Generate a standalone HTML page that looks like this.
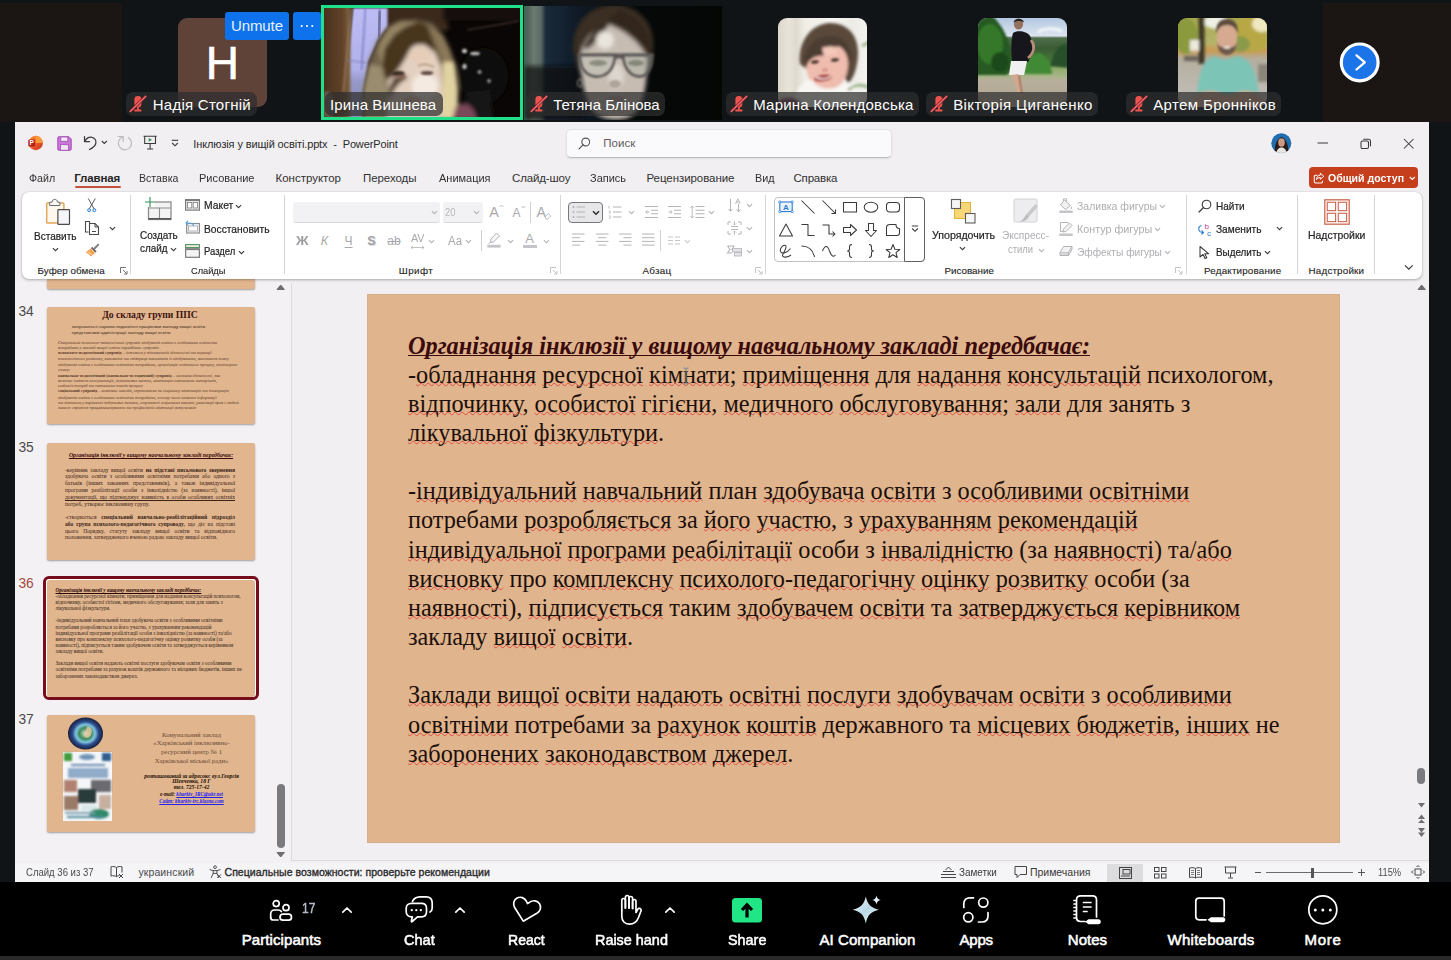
<!DOCTYPE html>
<html lang="uk"><head><meta charset="utf-8"><title>Zoom Meeting</title><style>
html,body{margin:0;padding:0}
body{width:1451px;height:960px;overflow:hidden;background:#111417;position:relative;font-family:"Liberation Sans",sans-serif}
.a{position:absolute;box-sizing:border-box}
.t{position:absolute;white-space:pre}
svg{position:absolute;overflow:visible}
.sl{font:400 24.27px/29px "Liberation Serif",serif;color:#1c0f0a}
.sl u{text-decoration:underline wavy rgba(225,40,40,.7);text-decoration-thickness:0.55px;text-underline-offset:-1.3px;text-decoration-skip-ink:none}

.lbl{position:absolute;top:91.5px;height:24.5px;border-radius:7px;background:rgba(46,46,46,.72)}
.nm{position:absolute;white-space:nowrap;color:#fff;font:400 15px/20px "Liberation Sans",sans-serif;top:94.5px}
.av{position:absolute;top:17.5px;width:89.5px;height:89px;border-radius:9px;overflow:hidden}

.th{position:absolute;left:46.5px;width:208.5px;height:117px;background:#e1b58d;border-radius:2px;box-shadow:0 1px 2px rgba(0,0,0,.35);overflow:hidden}
.th u{text-decoration-skip-ink:none;text-decoration-thickness:.5px}
.th div{position:absolute;white-space:nowrap;font-family:"Liberation Serif",serif;color:#2a1a12}

.tn{position:absolute;left:18.5px;font:400 13.8px/16px "Liberation Sans",sans-serif;color:#4a4a4a;letter-spacing:-.2px}
.j{text-align:justify;text-align-last:justify;white-space:normal!important}
</style></head><body>
<!-- p00_base.py -->
<div class="a" style="left:0px;top:0px;width:1451px;height:960px;background:#111417;"></div>
<div class="a" style="left:0px;top:3px;width:122px;height:119px;background:#1b1614;"></div>
<div class="a" style="left:1323px;top:3px;width:128px;height:119px;background:#1b1614;"></div>
<div class="a" style="left:15px;top:122px;width:1414px;height:760px;background:#f1eff2;"></div>
<div class="a" style="left:0px;top:882px;width:1451px;height:78px;background:#000;"></div>
<div class="a" style="left:0px;top:956px;width:1451px;height:4px;background:#2a2a2a;"></div>
<!-- p10_top.py -->
<div class="av" style="left:177.500px;background:#5f4339"></div>
<div class="t" style="left:22.4px;width:400px;text-align:center;top:33.0px;font:400 46px/60px 'Liberation Sans',sans-serif;color:#fff;-webkit-text-stroke:0.6px #fff;">Н</div>
<div class="a" style="left:225px;top:12px;width:64px;height:28px;background:#0e72ed;border-radius:3px"></div>
<div class="t" style="left:231.0px;top:16.0px;font:400 15px/20px 'Liberation Sans',sans-serif;color:#e8f1ff;letter-spacing:-0.105px;">Unmute</div>
<div class="a" style="left:293px;top:12px;width:28px;height:28px;background:#0e72ed;border-radius:3px"></div>
<svg style="left:293px;top:12px" width="28" height="28"><circle cx="8.700" cy="14" r="1.050" fill="#fff"/><circle cx="14" cy="14" r="1.050" fill="#fff"/><circle cx="19.300" cy="14" r="1.050" fill="#fff"/></svg>
<svg style="left:324px;top:8px" width="196" height="109" viewBox="0 0 196 109"><defs><filter id="b2" x="-20%" y="-20%" width="140%" height="140%"><feGaussianBlur stdDeviation="1.900"/></filter><filter id="b2s" x="-20%" y="-20%" width="140%" height="140%"><feGaussianBlur stdDeviation=".9"/></filter><clipPath id="c2"><rect width="196" height="109"/></clipPath><linearGradient id="w2" x1="0" y1="0" x2="0" y2="1"><stop offset="0" stop-color="#bdbcf5"/><stop offset=".55" stop-color="#b0b0ea"/><stop offset=".66" stop-color="#9598c8"/><stop offset="1" stop-color="#8a8eb4"/></linearGradient><linearGradient id="k2" x1="0" x2="1"><stop offset="0" stop-color="#45301d"/><stop offset=".45" stop-color="#573c24"/><stop offset=".75" stop-color="#62442a"/><stop offset="1" stop-color="#856848"/></linearGradient></defs>
<g clip-path="url(#c2)"><rect width="196" height="109" fill="#0a0605"/>
<rect x="60" y="-3" width="64" height="26" fill="#3a2a1b" filter="url(#b2)"/>
<rect x="120" y="-3" width="80" height="16" fill="#17100b" filter="url(#b2)"/>
<path d="M29.0 0.0 L63.5 0.0 L63.5 18.9 L54.0 32.4 L44.6 54.0 L39.2 82.4 L39.2 112.1 L18.9 112.1 L20.3 82.4z" fill="url(#w2)" filter="url(#b2s)"/>
<rect x="-2" y="-2" width="28.500" height="113" fill="url(#k2)" filter="url(#b2s)"/>
<path d="M27.500 0L19.500 84" stroke="#8c7050" stroke-width="2.200" filter="url(#b2s)"/>
<path d="M41.500 0L37.500 62" stroke="#6e6db8" stroke-width="1.200" filter="url(#b2s)"/>
<path d="M56 2L54.500 30" stroke="#5d5d84" stroke-width="3" filter="url(#b2s)"/>
<path d="M23 52L42 55" stroke="#7a7eac" stroke-width="1" filter="url(#b2s)"/>
<path d="M0 84C4 82 8 84 10 90V109H0z" fill="#6a5a4a" filter="url(#b2s)"/>
<g filter="url(#b2)">
<ellipse cx="160" cy="68" rx="24" ry="28" fill="#0b0d08"/>
<path d="M142 84L166 82L170 112H138z" fill="#161618"/>
<path d="M39.2 112.1 L38.5 83.7 L44.6 54.0 L54.0 31.1 L63.5 18.9 L75.6 12.8 L94.6 11.9 L108.1 14.9 L118.9 27.0 L125.6 40.5 L132.4 58.1 L134.4 81.0 L133.1 112.1z" fill="#6e6046"/>
<path d="M64.8 20.3 L75.6 13.5 L93.2 12.8 L86.5 24.3 L75.6 35.1 L63.5 51.3 L56.7 56.7 L54.0 40.5z" fill="#948464"/>
<path d="M104.0 16.9 L118.9 27.0 L125.6 40.5 L129.7 54.0 L121.6 59.4 L116.2 45.9 L110.8 32.4z" fill="#8a7858"/>
<path d="M39.2 112.1 L38.5 83.7 L44.6 56.7 L58.1 58.1 L61.5 70.2 L62.8 83.7 L62.8 112.1z" fill="#9a8c6e"/>
<path d="M118.9 54.0 L129.7 54.0 L134.0 81.0 L133.1 112.1 L117.5 112.1 L118.3 81.0z" fill="#e2d3a2"/>
<path d="M62.8 112.1 L63.5 82.4 L64.8 63.5 L72.9 45.9 L86.5 37.1 L100.0 36.5 L110.8 44.6 L117.2 59.4 L118.3 81.0 L117.5 112.1z" fill="#e4d0c0"/>
<path d="M94.6 13.5 L102.7 17.6 L108.1 31.1 L112.1 44.6 L108.1 40.5 L100.0 35.8 L91.9 36.5 L86.5 40.5 L81.0 51.3 L75.6 59.4 L67.5 70.2 L60.8 70.2 L58.1 56.7 L60.8 40.5 L70.2 27.0 L81.0 18.9z" fill="#46351f"/>
<ellipse cx="101" cy="78" rx="13" ry="13" fill="#f4eae2"/>
<ellipse cx="96" cy="48" rx="11" ry="7" fill="#e6cdb8"/>
<path d="M64 84C66 74 70 68 78 64L84 70C76 74 70 80 66 92z" fill="#5a4632"/>
<path d="M132 98C142 92 150 98 153 112H128z" fill="#7c4a5a"/>
</g>
<g filter="url(#b2s)"><ellipse cx="74" cy="65.500" rx="6.500" ry="2.600" fill="#3a2a22"/><ellipse cx="76" cy="69" rx="6" ry="2" fill="#8a6a5c" opacity=".7"/><ellipse cx="103" cy="65" rx="6.500" ry="2" fill="#5c483c"/><path d="M94 58C98 56 104 56 110 59" stroke="#a08060" stroke-width="1.200" fill="none"/><ellipse cx="88" cy="92" rx="9" ry="4" fill="#cfa090" opacity=".6"/>
<ellipse cx="140.500" cy="43" rx="2.600" ry="2.200" fill="#c8c8c8"/><ellipse cx="151" cy="45.500" rx="5" ry="1.800" fill="#bcbcbc"/><ellipse cx="140.500" cy="58.500" rx="2.200" ry="2.800" fill="#b8b8b8"/><circle cx="155.500" cy="64" r="2" fill="#9c9c9c"/><circle cx="165" cy="73" r="2" fill="#8c8c8c"/>
<path d="M143 22L195 13" stroke="#4a3c36" stroke-width="1.200"/></g>
</g></svg>
<div class="a" style="left:321px;top:5px;width:202px;height:115px;border:3px solid #21e08a"></div>
<svg style="left:523.500px;top:6px" width="198" height="114" viewBox="0 0 198 114"><defs><filter id="b3" x="-20%" y="-20%" width="140%" height="140%"><feGaussianBlur stdDeviation="2.200"/></filter><filter id="b3s" x="-20%" y="-20%" width="140%" height="140%"><feGaussianBlur stdDeviation=".9"/></filter><clipPath id="c3"><rect width="198" height="114"/></clipPath><linearGradient id="g3" x1="0" x2="1"><stop offset="0" stop-color="#1f7a52"/><stop offset=".012" stop-color="#4f6058"/><stop offset=".05" stop-color="#6c7a70"/><stop offset=".085" stop-color="#5a6a64"/><stop offset=".11" stop-color="#1a2a3a"/><stop offset=".25" stop-color="#101c2a"/><stop offset=".5" stop-color="#060a0a"/><stop offset="1" stop-color="#040604"/></linearGradient></defs>
<g clip-path="url(#c3)"><rect width="198" height="114" fill="url(#g3)"/>
<rect x="0" y="60" width="60" height="54" fill="#080c0e" opacity=".7" filter="url(#b3)"/>
<g filter="url(#b3)">
<path d="M50 48C46 22 62 0 90 -2C118 0 134 22 128 50C126 62 120 70 116 74L62 74C56 68 52 60 50 48z" fill="#3a2e24"/>
<path d="M57 50C58 34 70 22 84 18C100 24 116 36 122 50C124 70 122 92 112 106C104 116 80 116 70 106C60 94 56 70 57 50z" fill="#c6bcb2"/>
<path d="M60 40C68 26 78 16 88 12C82 24 76 34 62 44z" fill="#3a2e24"/>
<path d="M84 14C100 18 116 30 126 48C128 30 118 10 96 4z" fill="#32281e"/>
<ellipse cx="81" cy="34" rx="9" ry="9" fill="#e9e4dc"/>
<ellipse cx="92" cy="70" rx="8" ry="12" fill="#ddd6ce"/>
</g>
<g filter="url(#b3s)"><path d="M55 49H128" stroke="#5c5856" stroke-width="3"/><path d="M55.500 49C56 62 62 70 72 70.500C84 70.500 90 62 91 49z" fill="rgba(190,196,184,.4)" stroke="#5c5856" stroke-width="2.800"/><path d="M99 49C100 62 106 70 115 70.500C124 70.500 128 62 128.500 49z" fill="rgba(170,176,164,.38)" stroke="#5c5856" stroke-width="2.800"/><path d="M91 52C94 50 96 50 99 52" stroke="#5c5856" stroke-width="3" fill="none"/></g>
<g filter="url(#b3s)"><ellipse cx="74" cy="57" rx="9" ry="3" fill="#7c8070" opacity=".8"/><ellipse cx="112" cy="57" rx="8" ry="3" fill="#767a6c" opacity=".8"/><ellipse cx="91" cy="78" rx="6" ry="4" fill="#b0a498"/><ellipse cx="56" cy="77" rx="2.500" ry="4" fill="none" stroke="#9a9488" stroke-width="1"/><ellipse cx="92" cy="93" rx="10" ry="3" fill="#a89088" opacity=".7"/></g>
</g></svg>
<div class="av" style="left:777.500px"><svg width="90" height="89" viewBox="0 0 90 89"><defs><filter id="b4" x="-20%" y="-20%" width="140%" height="140%"><feGaussianBlur stdDeviation="1.700"/></filter><filter id="b4s" x="-20%" y="-20%" width="140%" height="140%"><feGaussianBlur stdDeviation=".8"/></filter><linearGradient id="g4" x1="0" x2="1"><stop offset="0" stop-color="#dcd6ca"/><stop offset=".12" stop-color="#e9e4da"/><stop offset=".2" stop-color="#dfdacf"/><stop offset=".3" stop-color="#f0ede6"/><stop offset=".6" stop-color="#f6f5f1"/><stop offset=".82" stop-color="#ecebe6"/><stop offset="1" stop-color="#f4f3ef"/></linearGradient></defs>
<rect width="90" height="89" fill="url(#g4)"/>
<g filter="url(#b4)">
<path d="M22 46C20 26 30 8 50 5C68 4 80 16 80 34C80 48 76 60 70 66L62 50L30 52z" fill="#5a483a"/>
<path d="M28 46C28 34 36 26 48 25C62 24 70 34 70 46C70 60 62 72 50 74C38 74 28 62 28 46z" fill="#efbcae"/>
<path d="M26 40C30 24 42 16 56 18C68 20 74 30 74 44C70 36 66 30 60 28C56 34 50 38 42 38C36 38 30 42 28 50z" fill="#4c3c30"/>
<path d="M44 30C50 28 56 28 60 30L58 36L46 38z" fill="#f4c8ba"/>
<path d="M14 92C16 74 24 62 34 62C40 72 56 74 66 64C76 64 84 74 86 92z" fill="#f7f6f3"/>
<path d="M0 84C6 78 18 78 24 86V92H0z" fill="#7a3a5c"/>
<path d="M70 72C78 66 84 66 92 70M84 28C88 26 90 24 92 24" stroke="#7f9a66" stroke-width="2.200" fill="none"/>
</g>
<g filter="url(#b4s)"><ellipse cx="45" cy="60" rx="9" ry="3.300" fill="#b04a48" transform="rotate(-8 45 60)"/><path d="M38 59C43 62 49 61 53 58" stroke="#f6eeea" stroke-width="1.500" fill="none"/><ellipse cx="37" cy="44" rx="4" ry="1.700" fill="#4a382e" transform="rotate(-6 37 44)"/><ellipse cx="57" cy="42" rx="4" ry="1.700" fill="#4a382e" transform="rotate(-6 57 42)"/><ellipse cx="47" cy="52" rx="3" ry="2" fill="#dc9a8c"/></g></svg></div>
<div class="av" style="left:977.500px"><svg width="90" height="89" viewBox="0 0 90 89"><defs><filter id="b5" x="-20%" y="-20%" width="140%" height="140%"><feGaussianBlur stdDeviation="1.300"/></filter><filter id="b5s" x="-20%" y="-20%" width="140%" height="140%"><feGaussianBlur stdDeviation=".7"/></filter><linearGradient id="g5" x1="0" y1="0" x2="0" y2="1"><stop offset="0" stop-color="#b4c8e2"/><stop offset=".2" stop-color="#dbe4ee"/><stop offset=".225" stop-color="#4f6d4c"/><stop offset=".34" stop-color="#3a5c34"/><stop offset=".5" stop-color="#4a7a3a"/><stop offset=".56" stop-color="#8eaa6a"/><stop offset=".66" stop-color="#a9b58a"/><stop offset=".7" stop-color="#b8ae9c"/><stop offset="1" stop-color="#b0a594"/></linearGradient></defs>
<rect width="90" height="89" fill="url(#g5)"/>
<g filter="url(#b5)">
<path d="M-2 -2H14C24 6 32 22 34 40C35 50 32 56 28 57H-2z" fill="#265a22"/>
<ellipse cx="12" cy="26" rx="13" ry="20" fill="#34782c"/><ellipse cx="22" cy="44" rx="9" ry="10" fill="#1f4a1c"/>
<path d="M46 56C48 42 56 32 64 36C70 40 74 50 74 56z" fill="#418a34"/>
<path d="M72 48C76 30 84 24 92 26V50z" fill="#26502a"/>
<path d="M60 14C66 10 76 10 84 13" stroke="#f4f6f8" stroke-width="3" fill="none"/>
</g>
<g filter="url(#b5s)">
<ellipse cx="40.500" cy="6" rx="4.600" ry="5.600" fill="#94705e"/><path d="M35.500 4.500C36.500 -.5 45 -.5 46 4.500C43 2.500 38.500 2.500 35.500 4.500z" fill="#2a2420"/>
<path d="M35 15C39 12 49 13 52 18C55 24 56 30 54 36L50 44H34C33 34 33 22 35 15z" fill="#15151a"/>
<path d="M53 22C57 27 57 34 50 40" stroke="#b58c76" stroke-width="2.800" fill="none"/>
<path d="M33 43H49L46 57H31z" fill="#f0f0f0"/>
<path d="M33 57L41 78H45L40 56z" fill="#cfa88e"/><path d="M41 57L44 76" stroke="#b48c74" stroke-width="3"/>
</g></svg></div>
<div class="av" style="left:1177.500px"><svg width="90" height="89" viewBox="0 0 90 89"><defs><filter id="b6" x="-20%" y="-20%" width="140%" height="140%"><feGaussianBlur stdDeviation="1.500"/></filter><filter id="b6s" x="-20%" y="-20%" width="140%" height="140%"><feGaussianBlur stdDeviation=".8"/></filter><linearGradient id="g6" x1="0" y1="0" x2="0" y2="1"><stop offset="0" stop-color="#a8a850"/><stop offset=".28" stop-color="#b6b46c"/><stop offset=".36" stop-color="#c99a52"/><stop offset=".46" stop-color="#b4ae9e"/><stop offset="1" stop-color="#c4c2be"/></linearGradient></defs>
<rect width="90" height="89" fill="url(#g6)"/>
<g filter="url(#b6)">
<ellipse cx="74" cy="16" rx="20" ry="18" fill="#b8a844"/><ellipse cx="84" cy="6" rx="10" ry="8" fill="#f0e8c0"/><ellipse cx="8" cy="18" rx="12" ry="18" fill="#8a9a3c"/><ellipse cx="38" cy="4" rx="12" ry="7" fill="#eef0e4"/><ellipse cx="62" cy="26" rx="10" ry="8" fill="#8a9a4a"/>
<rect x="20.500" y="-2" width="6" height="48" fill="#3a3424"/>
<rect x="12" y="22" width="9" height="11" fill="#ece8dc"/>
<rect x="6" y="38" width="14" height="5" fill="#6a6458"/>
<rect x="80" y="46" width="12" height="18" fill="#8a857a"/>
<path d="M19 92C19 62 22 44 36 38L46 42L60 38C76 42 81 60 81 92z" fill="#7cc4b6"/>
<path d="M16 80C24 70 38 72 50 78C62 72 76 70 84 80V92H16z" fill="#d6aa90"/>
</g>
<g filter="url(#b6s)"><path d="M39 14C39 6 43 3 49 3C55 3 59 6 59 14V24C59 32 55 36 49 36C43 36 39 32 39 24z" fill="#d6aa90"/><path d="M38.500 16C37 6 42 1 49 1C56 1 61 6 59.500 16C58 10 54 7 49 7C44 7 40 10 38.500 16z" fill="#5c4c3e"/><path d="M39.500 24C41 30 44 29 49 29C54 29 57 30 58.500 24C59 32 55 37 49 37C43 37 39 32 39.500 24z" fill="#6e5848"/><ellipse cx="49" cy="29.500" rx="3.500" ry="1.200" fill="#f0e4de"/></g></svg></div>
<div class="lbl" style="left:125.5px;width:131.0px"></div>
<svg style="left:129.0px;top:95px" width="18" height="18" viewBox="0 0 18 18"><g fill="#ee5350"><rect x="5.400" y="1" width="7" height="11.500" rx="3.400"/><rect x="8" y="12" width="1.800" height="3"/><rect x="5.200" y="14.600" width="7.400" height="2" rx=".8"/></g><path d="M1.200 16.500L16.800 1.300" stroke="#7a1a1a" stroke-width="3"/><path d="M1.200 16.500L16.800 1.300" stroke="#f2707a" stroke-width="1.400" stroke-linecap="round"/></svg>
<div class="nm" style="left:152.7px;letter-spacing:0.258px">Надія Стогній</div>
<div class="lbl" style="left:324.5px;width:118.0px"></div>
<div class="nm" style="left:330.1px;letter-spacing:0.094px">Ірина Вишнева</div>
<div class="lbl" style="left:526px;width:139px"></div>
<svg style="left:529.5px;top:95px" width="18" height="18" viewBox="0 0 18 18"><g fill="#ee5350"><rect x="5.400" y="1" width="7" height="11.500" rx="3.400"/><rect x="8" y="12" width="1.800" height="3"/><rect x="5.200" y="14.600" width="7.400" height="2" rx=".8"/></g><path d="M1.200 16.500L16.800 1.300" stroke="#7a1a1a" stroke-width="3"/><path d="M1.200 16.500L16.800 1.300" stroke="#f2707a" stroke-width="1.400" stroke-linecap="round"/></svg>
<div class="nm" style="left:553.2px;letter-spacing:0.001px">Тетяна Блінова</div>
<div class="lbl" style="left:726px;width:193px"></div>
<svg style="left:729.5px;top:95px" width="18" height="18" viewBox="0 0 18 18"><g fill="#ee5350"><rect x="5.400" y="1" width="7" height="11.500" rx="3.400"/><rect x="8" y="12" width="1.800" height="3"/><rect x="5.200" y="14.600" width="7.400" height="2" rx=".8"/></g><path d="M1.200 16.500L16.800 1.300" stroke="#7a1a1a" stroke-width="3"/><path d="M1.200 16.500L16.800 1.300" stroke="#f2707a" stroke-width="1.400" stroke-linecap="round"/></svg>
<div class="nm" style="left:753.2px;letter-spacing:0.228px">Марина Колендовська</div>
<div class="lbl" style="left:926px;width:172px"></div>
<svg style="left:929.5px;top:95px" width="18" height="18" viewBox="0 0 18 18"><g fill="#ee5350"><rect x="5.400" y="1" width="7" height="11.500" rx="3.400"/><rect x="8" y="12" width="1.800" height="3"/><rect x="5.200" y="14.600" width="7.400" height="2" rx=".8"/></g><path d="M1.200 16.500L16.800 1.300" stroke="#7a1a1a" stroke-width="3"/><path d="M1.200 16.500L16.800 1.300" stroke="#f2707a" stroke-width="1.400" stroke-linecap="round"/></svg>
<div class="nm" style="left:953.2px;letter-spacing:0.422px">Вікторія Циганенко</div>
<div class="lbl" style="left:1126px;width:155px"></div>
<svg style="left:1129.5px;top:95px" width="18" height="18" viewBox="0 0 18 18"><g fill="#ee5350"><rect x="5.400" y="1" width="7" height="11.500" rx="3.400"/><rect x="8" y="12" width="1.800" height="3"/><rect x="5.200" y="14.600" width="7.400" height="2" rx=".8"/></g><path d="M1.200 16.500L16.800 1.300" stroke="#7a1a1a" stroke-width="3"/><path d="M1.200 16.500L16.800 1.300" stroke="#f2707a" stroke-width="1.400" stroke-linecap="round"/></svg>
<div class="nm" style="left:1153.2px;letter-spacing:0.399px">Артем Бронніков</div>
<svg style="left:1339px;top:42px" width="42" height="42" viewBox="0 0 42 42"><circle cx="20.700" cy="20.400" r="18.400" fill="#1b74e8" stroke="#fff" stroke-width="3.200"/><path d="M17.500 13.300L25.800 20.400L17.500 27.500" fill="none" stroke="#fff" stroke-width="2.300" stroke-linecap="round" stroke-linejoin="round"/></svg>
<!-- p20_titlebar.py -->
<svg style="left:27px;top:135px" width="17" height="17" viewBox="0 0 17 17"><defs><linearGradient id="pl" x1="0" y1="0" x2="1" y2="1"><stop offset="0" stop-color="#f9a03c"/><stop offset=".5" stop-color="#ee5b2a"/><stop offset="1" stop-color="#c4321c"/></linearGradient></defs><circle cx="8.700" cy="8" r="7.200" fill="url(#pl)"/><path d="M8.700 .8A7.200 7.200 0 0 1 15.900 8H8.700z" fill="#fb9a3a"/><rect x="1.300" y="4.600" width="6.800" height="6.800" rx="1.200" fill="#b4241c"/><text x="4.700" y="10.300" font-family="Liberation Sans,sans-serif" font-size="6.500" font-weight="700" fill="#fff" text-anchor="middle">P</text></svg>
<svg style="left:57px;top:135.500px" width="15" height="15" viewBox="0 0 15 15"><path d="M.8 1.800C.8 1.200 1.200 .8 1.800 .8H12L14.200 3V13.200C14.200 13.800 13.800 14.200 13.200 14.200H1.800C1.200 14.200 .8 13.800 .8 13.200z" fill="#c879d8" stroke="#a24cb6" stroke-width="1"/><rect x="3.800" y="1" width="7" height="4.300" fill="#f3e6f6" stroke="#a24cb6" stroke-width=".8"/><rect x="3.500" y="8.700" width="8" height="5.500" fill="#f3e6f6" stroke="#a24cb6" stroke-width=".8"/></svg>
<svg style="left:83px;top:135px" width="15" height="16" viewBox="0 0 15 16"><path d="M1.500 1.500V6.500H6.500M1.800 6.300C3.500 3.300 6.500 1.800 9 2.300C12 2.900 13.500 5.600 12.800 8.500C12.200 11 9.500 13 6.500 14.500" fill="none" stroke="#3b3a39" stroke-width="1.250" stroke-linecap="round" stroke-linejoin="round"/></svg>
<svg style="left:100.800px;top:140.200px" width="7" height="5"><path d="M.8 1L3.300 3.500L5.800 1" fill="none" stroke="#3b3a39" stroke-width="1.100"/></svg>
<svg style="left:116.500px;top:135px" width="16" height="16" viewBox="0 0 16 16"><path d="M11.300 2.500A6.600 6.600 0 1 1 3.300 3.500L6 1.500" fill="none" stroke="#bbbabe" stroke-width="1.200" stroke-linecap="round"/><path d="M1.200 1.500H6.200V6.400" fill="none" stroke="#bbbabe" stroke-width="1.200" stroke-linecap="round" stroke-linejoin="round"/></svg>
<svg style="left:142.500px;top:135px" width="14.200" height="15.500" viewBox="0 0 15 16" preserveAspectRatio="none"><path d="M.5 1.300H14.500M1.800 1.300V8.800H13.200V1.300M7.500 8.800V14.300M4.300 14.500H10.700" fill="none" stroke="#3b3a39" stroke-width="1.150"/><path d="M6 3.200L9.500 5L6 6.900z" fill="#2e8b57"/></svg>
<svg style="left:171px;top:139.300px" width="8" height="9"><path d="M.8 1.300H7.200" stroke="#3b3a39" stroke-width="1.100"/><path d="M1.200 4L4 6.800L6.800 4" fill="none" stroke="#3b3a39" stroke-width="1.100"/></svg>
<div class="t" style="left:193.3px;top:136.6px;font:400 11px/14px 'Liberation Sans',sans-serif;color:#2b2b2b;letter-spacing:-0.128px;">Інклюзія у вищій освіті.pptx  -  PowerPoint</div>
<div class="a" style="left:566px;top:129px;width:326px;height:28.500px;border-radius:5px;background:#faf9fb;border:1px solid #e2e1e5;border-bottom-color:#bcbbc0;box-shadow:0 1px 2px rgba(0,0,0,.08)"></div>
<svg style="left:578px;top:137px" width="13" height="13" viewBox="0 0 13 13"><circle cx="7.700" cy="5" r="3.900" fill="none" stroke="#555" stroke-width="1.100"/><path d="M5 7.800L1 11.800" stroke="#555" stroke-width="1.200" stroke-linecap="round"/></svg>
<div class="t" style="left:603.3px;top:136.0px;font:400 11.5px/15px 'Liberation Sans',sans-serif;color:#605e5c;letter-spacing:0.033px;">Поиск</div>
<svg style="left:1271px;top:133px" width="21" height="21" viewBox="0 0 21 21"><defs><clipPath id="ua"><circle cx="10.300" cy="10.300" r="10"/></clipPath><filter id="ub"><feGaussianBlur stdDeviation=".6"/></filter></defs><g clip-path="url(#ua)"><rect width="21" height="21" fill="#1f6fb0"/><g filter="url(#ub)"><path d="M4 21C3 14 5 6 10.500 4C16 6 18 14 17 21z" fill="#2a1c18"/><ellipse cx="10.500" cy="9.500" rx="3.300" ry="4.200" fill="#c99a84"/><path d="M5 21C6 16 8 14.500 10.500 14.500C13 14.500 15 16 16 21z" fill="#e8e4e0"/></g></g></svg>
<svg style="left:1317px;top:142px" width="12" height="2"><path d="M.5 1H11" stroke="#3b3a39" stroke-width="1"/></svg>
<svg style="left:1359.500px;top:137.500px" width="12" height="12" viewBox="0 0 12 12"><rect x="1" y="3" width="7.500" height="7.500" rx="1.500" fill="none" stroke="#3b3a39" stroke-width="1.050"/><path d="M3.300 1.200H8.500C9.800 1.200 10.500 1.900 10.500 3.200V8.300" fill="none" stroke="#3b3a39" stroke-width="1.050"/></svg>
<svg style="left:1402.500px;top:137.500px" width="12" height="12" viewBox="0 0 12 12"><path d="M1 1L10.500 10.500M10.500 1L1 10.500" stroke="#3b3a39" stroke-width="1.050"/></svg>
<div class="t" style="left:29.3px;top:170.8px;font:400 11.5px/15px 'Liberation Sans',sans-serif;color:#323130;transform:scaleX(0.9267);transform-origin:0 50%;">Файл</div>
<div class="t" style="left:138.8px;top:170.8px;font:400 11.5px/15px 'Liberation Sans',sans-serif;color:#323130;transform:scaleX(0.9218);transform-origin:0 50%;">Вставка</div>
<div class="t" style="left:198.5px;top:170.8px;font:400 11.5px/15px 'Liberation Sans',sans-serif;color:#323130;transform:scaleX(0.9583);transform-origin:0 50%;">Рисование</div>
<div class="t" style="left:275.5px;top:170.8px;font:400 11.5px/15px 'Liberation Sans',sans-serif;color:#323130;letter-spacing:-0.007px;">Конструктор</div>
<div class="t" style="left:363.0px;top:170.8px;font:400 11.5px/15px 'Liberation Sans',sans-serif;color:#323130;letter-spacing:-0.063px;">Переходы</div>
<div class="t" style="left:439.0px;top:170.8px;font:400 11.5px/15px 'Liberation Sans',sans-serif;color:#323130;transform:scaleX(0.9540);transform-origin:0 50%;">Анимация</div>
<div class="t" style="left:512.0px;top:170.8px;font:400 11.5px/15px 'Liberation Sans',sans-serif;color:#323130;letter-spacing:-0.140px;">Слайд-шоу</div>
<div class="t" style="left:589.5px;top:170.8px;font:400 11.5px/15px 'Liberation Sans',sans-serif;color:#323130;transform:scaleX(0.9540);transform-origin:0 50%;">Запись</div>
<div class="t" style="left:646.5px;top:170.8px;font:400 11.5px/15px 'Liberation Sans',sans-serif;color:#323130;letter-spacing:-0.061px;">Рецензирование</div>
<div class="t" style="left:755.0px;top:170.8px;font:400 11.5px/15px 'Liberation Sans',sans-serif;color:#323130;transform:scaleX(0.9373);transform-origin:0 50%;">Вид</div>
<div class="t" style="left:793.5px;top:170.8px;font:400 11.5px/15px 'Liberation Sans',sans-serif;color:#323130;letter-spacing:-0.185px;">Справка</div>
<div class="t" style="left:74.3px;top:170.8px;font:700 11.5px/15px 'Liberation Sans',sans-serif;color:#252423;letter-spacing:-0.128px;">Главная</div>
<div class="a" style="left:74.5px;top:185.7px;width:46.3px;height:2.2px;background:#c1533b;border-radius:1px"></div>
<div class="a" style="left:1309.3px;top:167px;width:108.6px;height:21px;background:#c63f1d;border-radius:4px"></div>
<svg style="left:1312.500px;top:171.500px" width="12" height="12" viewBox="0 0 12 12"><path d="M4.500 3.200H2.500C1.800 3.200 1.300 3.700 1.300 4.400V9.800C1.300 10.500 1.800 11 2.500 11H8.300C9 11 9.500 10.500 9.500 9.800V8.800" fill="none" stroke="#fff" stroke-width="1.050"/><path d="M7.300 1.200L10.800 4.300L7.300 7.300V5.500C5.500 5.500 4.300 6.200 3.500 7.600C3.700 4.800 5 3.300 7.300 3.100z" fill="none" stroke="#fff" stroke-width="1" stroke-linejoin="round"/></svg>
<div class="t" style="left:1327.6px;top:170.5px;font:700 11.5px/15px 'Liberation Sans',sans-serif;color:#fff;transform:scaleX(0.9166);transform-origin:0 50%;">Общий доступ</div>
<svg style="left:1409px;top:175.500px" width="7" height="5"><path d="M.8 1L3.300 3.500L5.800 1" fill="none" stroke="#fff" stroke-width="1.100"/></svg>
<!-- p25_content.py -->
<div class="a" style="left:15px;top:282px;width:277px;height:580px;background:#f3f1f4;"></div>
<div class="a" style="left:290.8px;top:283px;width:1px;height:578px;background:#dad9dd;"></div>
<div class="a" style="left:292px;top:860px;width:1137px;height:1px;background:#dddce0;"></div>
<div class="a" style="left:15px;top:862.5px;width:1414px;height:19.5px;background:#f5f4f6;"></div>
<div class="th" style="top:279px;height:9.500px;border-radius:0 0 2px 2px"></div>
<div class="th" style="top:307.4px"><div style="left:-0.6px;top:1.85px;font-size:9.6px;line-height:11.52px;width:208px;text-align:center;font-weight:700;color:#3c1412">До складу групи ППС</div><div style="left:25.3px;top:17.00px;font-size:4.35px;line-height:5.22px;font-family:'Liberation Sans',sans-serif;color:#3a2a20">залучаються науково-педагогічні працівники закладу вищої освіти,</div><div style="left:25.3px;top:22.30px;font-size:4.35px;line-height:5.22px;font-family:'Liberation Sans',sans-serif;color:#3a2a20">представники адміністрації закладу вищої освіти</div><div style="left:11.5px;top:32.16px;font-size:4.25px;line-height:5.10px;color:#5a3a2a"><i>Спеціальний психолого-педагогічний супровід здобувачів освіти з особливими освітніми</i></div><div style="left:11.5px;top:37.37px;font-size:4.25px;line-height:5.10px;color:#5a3a2a"><i>потребами у закладі вищої освіти передбачає супровід:</i></div><div style="left:11.5px;top:42.97px;font-size:4.25px;line-height:5.10px;color:#5a3a2a"><b>психолого-педагогічний супровід</b> <i>– допомога у пізнавальній діяльності та корекції</i></div><div style="left:11.5px;top:48.77px;font-size:4.25px;line-height:5.10px;color:#5a3a2a"><i>психологічного розвитку, виховання та співпраця викладачів із здобувачами, визначення плану</i></div><div style="left:11.5px;top:54.16px;font-size:4.25px;line-height:5.10px;color:#5a3a2a"><i>здобувачів освіти з особливими освітніми потребами, організація освітнього процесу, моніторинг</i></div><div style="left:11.5px;top:59.37px;font-size:4.25px;line-height:5.10px;color:#5a3a2a"><i>стану.</i></div><div style="left:11.5px;top:65.16px;font-size:4.25px;line-height:5.10px;color:#5a3a2a"><b>навчально-педагогічний (навчально-методичний) супровід</b> <i>– система діяльності, яка</i></div><div style="left:11.5px;top:70.16px;font-size:4.25px;line-height:5.10px;color:#5a3a2a"><i>включає надання консультацій, додаткових занять, адаптацію навчальних матеріалів,</i></div><div style="left:11.5px;top:75.36px;font-size:4.25px;line-height:5.10px;color:#5a3a2a"><i>освітніх потреб та навчальних планів процесу</i></div><div style="left:11.5px;top:80.96px;font-size:4.25px;line-height:5.10px;color:#5a3a2a"><b>соціальний супровід</b> <i>– комплекс заходів, спрямованих на соціальну адаптацію та інтеграцію</i></div><div style="left:11.5px;top:87.16px;font-size:4.25px;line-height:5.10px;color:#5a3a2a"><i>здобувачів освіти з особливими освітніми потребами, в тому числі надання інформації</i></div><div style="left:11.5px;top:92.16px;font-size:4.25px;line-height:5.10px;color:#5a3a2a"><i>та допомоги у вирішенні побутових питань, отриманні соціальних виплат, реалізації прав і свобод</i></div><div style="left:11.5px;top:97.36px;font-size:4.25px;line-height:5.10px;color:#5a3a2a"><i>також сприяння працевлаштуванню та професійній адаптації випускників</i></div></div>
<div class="th" style="top:443.4px"><div style="left:0px;top:8.97px;font-size:5.85px;line-height:7.02px;width:208px;text-align:center;font-weight:700;font-style:italic;color:#3a0a0c;left:.5px"><u>Організація інклюзії у вищому навчальному закладі передбачає:</u></div><div class="j" style="left:18.5px;top:23.13px;font-size:5.6px;line-height:6.72px;width:170px;color:#3a2418">-керівник закладу вищої освіти <b>на підставі письмового звернення</b></div><div class="j" style="left:18.5px;top:29.53px;font-size:5.6px;line-height:6.72px;width:170px;color:#3a2418">здобувача освіти з особливими освітніми потребами або одного з</div><div class="j" style="left:18.5px;top:36.73px;font-size:5.6px;line-height:6.72px;width:170px;color:#3a2418">батьків (інших законних представників), а також індивідуальної</div><div class="j" style="left:18.5px;top:43.13px;font-size:5.6px;line-height:6.72px;width:170px;color:#3a2418">програми реабілітації особи з інвалідністю (за наявності), іншої</div><div class="j" style="left:18.5px;top:50.13px;font-size:5.6px;line-height:6.72px;width:170px;color:#3a2418"><u>документації, що підтверджує наявність в особи особливих освітніх</u></div><div style="left:18.5px;top:57.13px;font-size:5.6px;line-height:6.72px;color:#3a2418">потреб, утворює інклюзивну групу.</div><div class="j" style="left:18.5px;top:70.53px;font-size:5.6px;line-height:6.72px;width:170px;color:#3a2418">-створюється <b>спеціальний навчально-реабілітаційний підрозділ</b></div><div class="j" style="left:18.5px;top:77.13px;font-size:5.6px;line-height:6.72px;width:170px;color:#3a2418"><b>або група психолого-педагогічного супроводу</b>, що діє на підставі</div><div class="j" style="left:18.5px;top:84.13px;font-size:5.6px;line-height:6.72px;width:170px;color:#3a2418">цього Порядку, статуту закладу вищої освіти та відповідного</div><div style="left:18.5px;top:90.53px;font-size:5.6px;line-height:6.72px;color:#3a2418">положення, затвердженого вченою радою закладу вищої освіти.</div></div>
<div class="a" style="left:43px;top:576px;width:215.500px;height:124px;border:3px solid #760c1c;border-radius:6px;background:#fff"></div>
<div class="th" style="top:579.5px;box-shadow:none;border-radius:3px"><div style="left:9px;top:7.08px;font-size:5.19px;line-height:6.23px;font-weight:700;font-style:italic;color:#2a0608"><u>Організація інклюзії у вищому навчальному закладі передбачає:</u></div><div style="left:9px;top:13.28px;font-size:5.19px;line-height:6.23px;color:#33241a">-обладнання ресурсної кімнати; приміщення для надання консультацій психологом,</div><div style="left:9px;top:19.48px;font-size:5.19px;line-height:6.23px;color:#33241a">відпочинку, особистої гігієни, медичного обслуговування; зали для занять з</div><div style="left:9px;top:25.68px;font-size:5.19px;line-height:6.23px;color:#33241a">лікувальної фізкультури.</div><div style="left:9px;top:37.98px;font-size:5.19px;line-height:6.23px;color:#33241a">-індивідуальний навчальний план здобувача освіти з особливими освітніми</div><div style="left:9px;top:44.18px;font-size:5.19px;line-height:6.23px;color:#33241a">потребами розробляється за його участю, з урахуванням рекомендацій</div><div style="left:9px;top:50.38px;font-size:5.19px;line-height:6.23px;color:#33241a">індивідуальної програми реабілітації особи з інвалідністю (за наявності) та/або</div><div style="left:9px;top:56.58px;font-size:5.19px;line-height:6.23px;color:#33241a">висновку про комплексну психолого-педагогічну оцінку розвитку особи (за</div><div style="left:9px;top:62.78px;font-size:5.19px;line-height:6.23px;color:#33241a">наявності), підписується таким здобувачем освіти та затверджується керівником</div><div style="left:9px;top:68.38px;font-size:5.19px;line-height:6.23px;color:#33241a">закладу вищої освіти.</div><div style="left:9px;top:80.78px;font-size:5.19px;line-height:6.23px;color:#33241a">Заклади вищої освіти надають освітні послуги здобувачам освіти з особливими</div><div style="left:9px;top:86.98px;font-size:5.19px;line-height:6.23px;color:#33241a">освітніми потребами за рахунок коштів державного та місцевих бюджетів, інших не</div><div style="left:9px;top:93.18px;font-size:5.19px;line-height:6.23px;color:#33241a">заборонених законодавством джерел.</div></div>
<div class="th" style="top:715.4px"><svg style="left:20px;top:1px" width="38" height="36" viewBox="0 0 38 36"><defs><radialGradient id="lg"><stop offset="0" stop-color="#d8e8d0"/><stop offset=".35" stop-color="#3f8a5a"/><stop offset=".55" stop-color="#7fc4e0"/><stop offset=".75" stop-color="#2a4a8a"/><stop offset="1" stop-color="#1a1f3a"/></radialGradient><filter id="lb"><feGaussianBlur stdDeviation=".7"/></filter></defs><ellipse cx="18.500" cy="17.500" rx="17.500" ry="16" fill="url(#lg)" filter="url(#lb)"/><path d="M20 11C24 10 26 14 24 19C22 23 18 22 17 19" fill="#e8c9a0" opacity=".8" filter="url(#lb)"/></svg><svg style="left:16px;top:37px" width="49" height="69" viewBox="0 0 49 69"><defs><filter id="pb"><feGaussianBlur stdDeviation=".8"/></filter></defs><rect width="49" height="69" fill="#f4f6f8"/><g filter="url(#pb)"><rect x="1" y="1" width="8" height="8" fill="#3f9a3a"/><ellipse cx="24" cy="5" rx="8" ry="3" fill="#6f95b8"/><rect x="39" y="1" width="9" height="8" fill="#2f5f8f"/><rect x="8" y="12" width="34" height="2" fill="#6a8ab0"/><rect x="5" y="16" width="40" height="10" fill="#3f6fa0" opacity=".55"/><rect x="1" y="28" width="13" height="12" fill="#b08070"/><rect x="28" y="28" width="20" height="12" fill="#6a6a70"/><rect x="15" y="37" width="18" height="14" fill="#2a3a3a"/><rect x="1" y="44" width="14" height="14" fill="#9a7a68"/><rect x="36" y="43" width="12" height="14" fill="#c8b0a0"/><rect x="18" y="53" width="16" height="6" fill="#d8e8ea"/><ellipse cx="36" cy="62" rx="10" ry="5" fill="#2f8a6a"/><rect x="2" y="60" width="30" height="2" fill="#7aa0b0"/><rect x="4" y="64" width="36" height="2" fill="#4f8a9a"/></g></svg><div style="left:73px;top:15.35px;font-size:6.7px;line-height:8.04px;width:144px;text-align:center;color:#6a4a38">Комунальний заклад</div><div style="left:73px;top:23.65px;font-size:6.7px;line-height:8.04px;width:144px;text-align:center;color:#6a4a38">«Харківський інклюзивно-</div><div style="left:73px;top:32.45px;font-size:6.7px;line-height:8.04px;width:144px;text-align:center;color:#6a4a38">ресурсний центр № 1</div><div style="left:73px;top:41.25px;font-size:6.7px;line-height:8.04px;width:144px;text-align:center;color:#6a4a38">Харківської міської ради»</div><div style="left:73px;top:57.73px;font-size:5.6px;line-height:6.72px;width:144px;text-align:center;font-style:italic;font-weight:700;color:#1a1008">розташований за адресою: вул.Георгія</div><div style="left:73px;top:62.73px;font-size:5.6px;line-height:6.72px;width:144px;text-align:center;font-style:italic;font-weight:700;color:#1a1008">Шевченка, 18 Г</div><div style="left:73px;top:68.73px;font-size:5.6px;line-height:6.72px;width:144px;text-align:center;font-style:italic;font-weight:700;color:#1a1008">тел. 725-17-42</div><div style="left:73px;top:75.44px;font-size:5.1px;line-height:6.12px;width:144px;text-align:center;font-style:italic;font-weight:700;color:#1a1008">e-mail: <u style="color:#2222ee">kharkiv_IRC@ukr.net</u></div><div style="left:73px;top:82.44px;font-size:5.1px;line-height:6.12px;width:144px;text-align:center;font-style:italic;font-weight:700;color:#2222ee"><u style="color:#2222ee">Сайт: kharkiv-irc.klasna.com</u></div></div>
<div class="tn" style="top:303.7px;color:#4a4a4a">34</div>
<div class="tn" style="top:439.7px;color:#4a4a4a">35</div>
<div class="tn" style="top:576px;color:#a34a3e">36</div>
<div class="tn" style="top:712.2px;color:#4a4a4a">37</div>
<svg style="left:276px;top:283px" width="10" height="8"><path d="M1 6.500L4.700 2L8.400 6.500z" fill="#6e6d71" stroke="#6e6d71" stroke-width="1" stroke-linejoin="round"/></svg>
<div class="a" style="left:277px;top:784px;width:8px;height:63.5px;background:#7b7a7e;border-radius:4px"></div>
<svg style="left:276px;top:851px" width="10" height="8"><path d="M1 1.500L4.700 6L8.400 1.500z" fill="#6e6d71" stroke="#6e6d71" stroke-width="1" stroke-linejoin="round"/></svg>
<svg style="left:1416.500px;top:283px" width="10" height="8"><path d="M1 6.500L4.700 2L8.400 6.500z" fill="#6e6d71" stroke="#6e6d71" stroke-width="1" stroke-linejoin="round"/></svg>
<div class="a" style="left:1417.2px;top:768px;width:8.3px;height:16px;background:#7b7a7e;border-radius:4px"></div>
<svg style="left:1417px;top:801px" width="10" height="40" viewBox="0 0 10 40"><g fill="#6e6d71"><path d="M1 2L4.500 6.500L8 2z"/><path d="M1 18L4.500 13.500L8 18z"/><path d="M1 22L4.500 18.500L8 22z"/><path d="M1 27L4.500 31.500L8 27z"/><path d="M1 31.500L4.500 36L8 31.500z"/></g></svg>
<!-- p30_ribbon.py -->
<div class="a" style="left:22px;top:191.500px;width:1400px;height:87.500px;background:#fff;border-radius:7px;box-shadow:0 1px 3px rgba(0,0,0,.28),0 0 1px rgba(0,0,0,.2)"></div>
<svg style="left:45px;top:198px" width="27" height="28" viewBox="0 0 27 28"><rect x="1.700" y="4.900" width="17.200" height="20.200" rx=".8" fill="#fdf7ee" stroke="#e2a75c" stroke-width="1.500"/><path d="M4.700 7.500V4.200H7C7.500 .4 12.100 .4 12.600 4.200H14.900V7.500z" fill="#fafafa" stroke="#6a6a6a" stroke-width="1"/><rect x="12.900" y="11.600" width="11.600" height="14.800" rx=".6" fill="#f5f5fa" stroke="#4a4a4a" stroke-width="1.200"/></svg>
<div class="t" style="left:34.3px;top:228.8px;font:400 11.5px/15px 'Liberation Sans',sans-serif;color:#262524;-webkit-text-stroke:0.22px #262524;transform:scaleX(0.8718);transform-origin:0 50%;">Вставить</div>
<svg style="left:51.6px;top:246.9px" width="7" height="5"><path d="M.9 1.200L3.500 3.700L6.100 1.200" fill="none" stroke="#3b3a39" stroke-width="1.100"/></svg>
<svg style="left:86px;top:198px" width="12" height="15" viewBox="0 0 12 15"><path d="M2.300 .5L8.200 11M9.300 .5L3.200 11" stroke="#5a5a5a" stroke-width="1" fill="none"/><circle cx="3.100" cy="12.200" r="1.500" fill="#d6e8fa" stroke="#3b88d8" stroke-width="1"/><circle cx="8.300" cy="12.200" r="1.500" fill="#d6e8fa" stroke="#3b88d8" stroke-width="1"/></svg>
<svg style="left:84px;top:220px" width="16" height="16" viewBox="0 0 16 16"><path d="M5.500 3V1.500H1.500V12H4.500" fill="none" stroke="#4a4a4a" stroke-width="1.100"/><path d="M5.500 3.500H11L14.500 7V14.500H5.500z" fill="#fff" stroke="#4a4a4a" stroke-width="1.100"/><path d="M11 3.500V7H14.500" fill="none" stroke="#4a4a4a" stroke-width="1"/><path d="M8 11.500H12" stroke="#4a4a4a" stroke-width="1"/></svg>
<svg style="left:109.3px;top:226.1px" width="7" height="5"><path d="M.9 1.200L3.500 3.700L6.100 1.200" fill="none" stroke="#3b3a39" stroke-width="1.100"/></svg>
<svg style="left:85px;top:243px" width="15" height="15" viewBox="0 0 15 15"><path d="M9.500 5.500L13.300 1.700" stroke="#7a7a7a" stroke-width="1.800" stroke-linecap="round"/><path d="M6.500 4.500L11 9" stroke="#6a6a6a" stroke-width="1.800"/><path d="M5.500 5.500L10 10L6 13.500L.8 9.500z" fill="#f4a24c"/><path d="M2 10.500L5 12.500M3.500 9.200L6.800 11.500" stroke="#fff" stroke-width=".7"/></svg>
<div class="t" style="left:37.6px;top:264.2px;font:400 9.8px/13px 'Liberation Sans',sans-serif;color:#262524;letter-spacing:0.046px;-webkit-text-stroke:0.12px #262524;">Буфер обмена</div>
<svg style="left:119.5px;top:266.7px" width="8" height="8" viewBox="0 0 8 8"><path d="M.5 6V.5H6" fill="none" stroke="#76757a" stroke-width="1"/><path d="M3 3L7 7M7 4V7H4" fill="none" stroke="#76757a" stroke-width="1"/></svg>
<div class="a" style="left:129.9px;top:195px;width:1px;height:79px;background:#d6d5d9;"></div>
<svg style="left:144px;top:196px" width="29" height="26" viewBox="0 0 29 26"><rect x="4.500" y="6" width="22.500" height="17.500" fill="#f3f3f3" stroke="#8c8c8c" stroke-width="1.300"/><path d="M5 12H26.500M15.500 12V23" stroke="#8c8c8c" stroke-width="1.100"/><path d="M4.500 22.800H27" stroke="#555" stroke-width="1.600"/><rect x="0" y="0" width="11" height="11" fill="#fff"/><path d="M6 1V11M1 6H11" stroke="#2e8f56" stroke-width="1.100"/></svg>
<div class="t" style="left:139.9px;top:228.4px;font:400 11.5px/15px 'Liberation Sans',sans-serif;color:#262524;-webkit-text-stroke:0.22px #262524;transform:scaleX(0.8649);transform-origin:0 50%;">Создать</div>
<div class="t" style="left:139.9px;top:241.4px;font:400 11.5px/15px 'Liberation Sans',sans-serif;color:#262524;-webkit-text-stroke:0.22px #262524;transform:scaleX(0.8597);transform-origin:0 50%;">слайд</div>
<svg style="left:169.7px;top:247.0px" width="7" height="5"><path d="M.9 1.200L3.500 3.700L6.100 1.200" fill="none" stroke="#3b3a39" stroke-width="1.100"/></svg>
<svg style="left:185px;top:199px" width="15" height="12" viewBox="0 0 15 12"><rect x=".6" y=".6" width="13.800" height="10.500" fill="#f1f1f1" stroke="#7c7c7c" stroke-width="1.200"/><path d="M.6 1.300H14.400" stroke="#7c7c7c" stroke-width="1.500"/><rect x="2.500" y="3.500" width="4.300" height="5.500" fill="#fff" stroke="#7a7a7a" stroke-width=".8"/><rect x="8.200" y="3.500" width="4.300" height="5.500" fill="#fff" stroke="#7a7a7a" stroke-width=".8"/></svg>
<div class="t" style="left:203.7px;top:198.3px;font:400 11.5px/15px 'Liberation Sans',sans-serif;color:#262524;-webkit-text-stroke:0.22px #262524;transform:scaleX(0.9003);transform-origin:0 50%;">Макет</div>
<svg style="left:235.3px;top:204.0px" width="7" height="5"><path d="M.9 1.200L3.500 3.700L6.100 1.200" fill="none" stroke="#3b3a39" stroke-width="1.100"/></svg>
<svg style="left:185px;top:220px" width="15" height="14" viewBox="0 0 15 14"><rect x="1.600" y="3.500" width="12.800" height="9.500" fill="#f1f1f1" stroke="#8a8a8a" stroke-width="1.100"/><rect x="3.500" y="6" width="9" height="5" fill="#fff" stroke="#999" stroke-width=".7"/><path d="M.8 3.200L3 1M.8 3.200L3 5.300M.8 3.200H5.500C7.500 3.200 8.500 4.300 8.500 6" fill="none" stroke="#5b9ad8" stroke-width="1.100"/></svg>
<div class="t" style="left:203.7px;top:221.7px;font:400 11.5px/15px 'Liberation Sans',sans-serif;color:#262524;-webkit-text-stroke:0.22px #262524;transform:scaleX(0.8908);transform-origin:0 50%;">Восстановить</div>
<svg style="left:185px;top:244px" width="15" height="14" viewBox="0 0 15 14"><rect x=".6" y=".6" width="13.800" height="3" fill="#dfeedd" stroke="#4e8a57" stroke-width="1"/><rect x=".6" y="4.800" width="13.800" height="8.500" fill="#f4f4f4" stroke="#7c7c7c" stroke-width="1.200"/><path d="M.6 5.400H14.400" stroke="#7c7c7c" stroke-width="1.400"/></svg>
<div class="t" style="left:203.7px;top:244.3px;font:400 11.5px/15px 'Liberation Sans',sans-serif;color:#262524;-webkit-text-stroke:0.22px #262524;transform:scaleX(0.8235);transform-origin:0 50%;">Раздел</div>
<svg style="left:238.2px;top:250.0px" width="7" height="5"><path d="M.9 1.200L3.500 3.700L6.100 1.200" fill="none" stroke="#3b3a39" stroke-width="1.100"/></svg>
<div class="t" style="left:190.6px;top:264.2px;font:400 9.8px/13px 'Liberation Sans',sans-serif;color:#262524;-webkit-text-stroke:0.12px #262524;transform:scaleX(0.9430);transform-origin:0 50%;">Слайды</div>
<div class="a" style="left:283.7px;top:195px;width:1px;height:79px;background:#d6d5d9;"></div>
<div class="a" style="left:292.500px;top:201.500px;width:147.500px;height:21px;background:#f2f1f4;border-radius:3px;border-bottom:1px solid #d8d7db"></div>
<svg style="left:430.5px;top:210.0px" width="7" height="5"><path d="M.9 1.200L3.500 3.700L6.100 1.200" fill="none" stroke="#b4b3b7" stroke-width="1.100"/></svg>
<div class="a" style="left:442.500px;top:201.500px;width:40px;height:21px;background:#f2f1f4;border-radius:3px;border-bottom:1px solid #d8d7db"></div>
<div class="t" style="left:445.0px;top:204.7px;font:400 11.5px/15px 'Liberation Sans',sans-serif;color:#b9b8bc;transform:scaleX(0.8209);transform-origin:0 50%;">20</div>
<svg style="left:472.9px;top:210.0px" width="7" height="5"><path d="M.9 1.200L3.500 3.700L6.100 1.200" fill="none" stroke="#b4b3b7" stroke-width="1.100"/></svg>
<div class="t" style="left:489.2px;top:203.0px;font:400 14.5px/19px 'Liberation Sans',sans-serif;color:#a9a8ac;">A</div>
<svg style="left:498.5px;top:204px" width="5" height="4" viewBox="0 0 5 4"><path d="M.6 3L2.500 1L4.400 3" fill="none" stroke="#b4b3b7" stroke-width=".9"/></svg>
<div class="t" style="left:512.6px;top:205.3px;font:400 12px/16px 'Liberation Sans',sans-serif;color:#a9a8ac;">A</div>
<svg style="left:521px;top:204.5px" width="5" height="4" viewBox="0 0 5 4"><path d="M.6 1L2.500 3L4.400 1" fill="none" stroke="#b4b3b7" stroke-width=".9"/></svg>
<div class="a" style="left:529.8px;top:201.5px;width:1px;height:21.0px;background:#d0cfd3;"></div>
<div class="t" style="left:536.5px;top:203.0px;font:400 14px/18px 'Liberation Sans',sans-serif;color:#a9a8ac;">A</div>
<svg style="left:543.5px;top:211.5px" width="8" height="8" viewBox="0 0 8 8"><path d="M1 5L4.200 1.500L6.800 4L3.800 7.200H2.200z" fill="#fff" stroke="#b4b3b7" stroke-width=".9"/></svg>
<div class="t" style="left:295.8px;top:232.8px;font:700 12.5px/16px 'Liberation Sans',sans-serif;color:#9d9ca0;transform:scaleX(1.1064);transform-origin:0 50%;">Ж</div>
<div class="t" style="left:320.8px;top:232.8px;font:italic 400 12.5px/16px 'Liberation Sans',sans-serif;color:#a9a8ac;">К</div>
<div class="t" style="left:344.6px;top:232.5px;font:400 12px/16px 'Liberation Sans',sans-serif;color:#a9a8ac;text-decoration:underline;text-underline-offset:2px">Ч</div>
<div class="t" style="left:367.3px;top:232.8px;font:700 12.5px/16px 'Liberation Sans',sans-serif;color:#a3a2a6;text-shadow:1px 1px 0 #d8d7db">S</div>
<div class="t" style="left:387.3px;top:233.1px;font:400 12px/16px 'Liberation Sans',sans-serif;color:#a9a8ac;text-decoration:line-through">ab</div>
<div class="t" style="left:410.5px;top:231.3px;font:400 10.5px/14px 'Liberation Sans',sans-serif;color:#a9a8ac;transform:scaleX(1.0205);transform-origin:0 50%;">AV</div>
<svg style="left:410px;top:244.5px" width="15" height="5" viewBox="0 0 15 5"><path d="M1 2.500H14M3 .8L1 2.500L3 4.200M12 .8L14 2.500L12 4.200" fill="none" stroke="#b4b3b7" stroke-width=".8"/></svg>
<svg style="left:428.0px;top:238.6px" width="7" height="5"><path d="M.9 1.200L3.500 3.700L6.100 1.200" fill="none" stroke="#b4b3b7" stroke-width="1.100"/></svg>
<div class="t" style="left:447.5px;top:232.8px;font:400 12.5px/16px 'Liberation Sans',sans-serif;color:#a9a8ac;transform:scaleX(0.9156);transform-origin:0 50%;">Aa</div>
<svg style="left:465.0px;top:238.6px" width="7" height="5"><path d="M.9 1.200L3.500 3.700L6.100 1.200" fill="none" stroke="#b4b3b7" stroke-width="1.100"/></svg>
<div class="a" style="left:480.8px;top:230px;width:1px;height:20.5px;background:#d0cfd3;"></div>
<svg style="left:487px;top:232px" width="14" height="16" viewBox="0 0 14 16"><path d="M9.500 1L12.500 4L6.500 10L3.500 10.500L4 7z" fill="#f6f6f6" stroke="#b4b3b7" stroke-width="1"/><path d="M3.600 10.400L1.500 11.600" stroke="#b4b3b7" stroke-width="1"/><rect x=".3" y="12.800" width="13.400" height="2.800" fill="#c5c4c8"/></svg>
<svg style="left:506.5px;top:238.6px" width="7" height="5"><path d="M.9 1.200L3.500 3.700L6.100 1.200" fill="none" stroke="#b4b3b7" stroke-width="1.100"/></svg>
<div class="t" style="left:525.2px;top:230.3px;font:400 13px/17px 'Liberation Sans',sans-serif;color:#a9a8ac;">A</div>
<div class="a" style="left:523px;top:244.8px;width:13.7px;height:2.8px;background:#c5c4c8;"></div>
<svg style="left:542.8px;top:238.6px" width="7" height="5"><path d="M.9 1.200L3.500 3.700L6.100 1.200" fill="none" stroke="#b4b3b7" stroke-width="1.100"/></svg>
<div class="t" style="left:398.7px;top:264.2px;font:400 9.8px/13px 'Liberation Sans',sans-serif;color:#262524;letter-spacing:0.465px;-webkit-text-stroke:0.12px #262524;">Шрифт</div>
<svg style="left:550.0px;top:266.7px" width="8" height="8" viewBox="0 0 8 8"><path d="M.5 6V.5H6" fill="none" stroke="#c4c3c7" stroke-width="1"/><path d="M3 3L7 7M7 4V7H4" fill="none" stroke="#c4c3c7" stroke-width="1"/></svg>
<div class="a" style="left:559.9px;top:195px;width:1px;height:79px;background:#d6d5d9;"></div>
<div class="a" style="left:568px;top:201.500px;width:35px;height:21px;background:#e7e6e9;border-radius:4px;border:1px solid #77767a"></div>
<svg style="left:572px;top:205px" width="14" height="14" viewBox="0 0 14 14"><g fill="#b4b3b7"><circle cx="1.500" cy="2" r="1"/><circle cx="1.500" cy="7" r="1"/><circle cx="1.500" cy="12" r="1"/></g><path d="M4.500 2H13M4.500 7H13M4.500 12H13" stroke="#b4b3b7" stroke-width="1.100"/></svg>
<svg style="left:591.500px;top:210px" width="8" height="6"><path d="M1 1.300L4 4.300L7 1.300" fill="none" stroke="#2b2b2b" stroke-width="1.500"/></svg>
<svg style="left:608px;top:205px" width="14" height="14" viewBox="0 0 14 14"><path d="M5 2H13.500M5 7H13.500M5 12H13.500" stroke="#b4b3b7" stroke-width="1.100"/><path d="M1 .8V3.500M.8 6H2.200V8.200H.8M.8 10.800H2.200V13.200H.8" fill="none" stroke="#b4b3b7" stroke-width=".8"/></svg>
<svg style="left:628.1px;top:210.3px" width="7" height="5"><path d="M.9 1.200L3.500 3.700L6.100 1.200" fill="none" stroke="#b4b3b7" stroke-width="1.100"/></svg>
<svg style="left:645px;top:205px" width="13" height="14" viewBox="0 0 13 14"><path d="M0 1.500H13M6 5.300H13M6 8.800H13M0 12.500H13" stroke="#b4b3b7" stroke-width="1.100"/><path d="M4.500 7H.8M2.500 5.200L.8 7L2.500 8.800" fill="none" stroke="#b4b3b7" stroke-width=".9"/></svg>
<svg style="left:668px;top:205px" width="13" height="14" viewBox="0 0 13 14"><path d="M0 1.500H13M6 5.300H13M6 8.800H13M0 12.500H13" stroke="#b4b3b7" stroke-width="1.100"/><path d="M.5 7H4.200M2.500 5.200L4.200 7L2.500 8.800" fill="none" stroke="#b4b3b7" stroke-width=".9"/></svg>
<svg style="left:690px;top:205px" width="15" height="14" viewBox="0 0 15 14"><path d="M5.500 1.500H14.500M5.500 5.300H14.500M5.500 8.800H14.500M5.500 12.500H14.500" stroke="#b4b3b7" stroke-width="1.100"/><path d="M2.200 1V13M.5 2.800L2.200 1L3.900 2.800M.5 11.200L2.200 13L3.900 11.200" fill="none" stroke="#b4b3b7" stroke-width=".9"/></svg>
<svg style="left:708.2px;top:210.3px" width="7" height="5"><path d="M.9 1.200L3.500 3.700L6.100 1.200" fill="none" stroke="#b4b3b7" stroke-width="1.100"/></svg>
<svg style="left:728px;top:197.5px" width="14" height="15" viewBox="0 0 14 15"><path d="M2.500 1V13M.5 11L2.500 13.300L4.500 11M10.500 6V13.500M8.500 11.500L10.500 13.800L12.500 11.500" fill="none" stroke="#b4b3b7" stroke-width="1"/><path d="M7.500 6L9.800 .8L12.200 6M8.300 4.200H11.400" fill="none" stroke="#b4b3b7" stroke-width=".9"/></svg>
<svg style="left:745.5px;top:203.0px" width="7" height="5"><path d="M.9 1.200L3.500 3.700L6.100 1.200" fill="none" stroke="#b4b3b7" stroke-width="1.100"/></svg>
<svg style="left:727px;top:221px" width="15" height="14" viewBox="0 0 15 14"><path d="M1 4V1H4M11 1H14V4M14 10V13H11M4 13H1V10" fill="none" stroke="#b4b3b7" stroke-width="1"/><path d="M4 5.500H11M4 8.500H11" stroke="#b4b3b7" stroke-width="1"/><path d="M7.500 0V4M6 2.500L7.500 4L9 2.500M7.500 14V10M6 11.500L7.500 10L9 11.500" fill="none" stroke="#b4b3b7" stroke-width=".8"/></svg>
<svg style="left:745.5px;top:226.0px" width="7" height="5"><path d="M.9 1.200L3.500 3.700L6.100 1.200" fill="none" stroke="#b4b3b7" stroke-width="1.100"/></svg>
<svg style="left:727px;top:245px" width="15" height="12" viewBox="0 0 15 12"><path d="M.5 1H7L5 4.500L7.500 4.500M.5 1L3 4.500L.5 8H5" fill="none" stroke="#b4b3b7" stroke-width="1.100"/><rect x="5.500" y="3.500" width="9" height="3.500" fill="#e4e3e6" stroke="#b4b3b7" stroke-width=".8"/><rect x="7.500" y="7.500" width="7" height="3.500" fill="#e4e3e6" stroke="#b4b3b7" stroke-width=".8"/></svg>
<svg style="left:745.5px;top:249.3px" width="7" height="5"><path d="M.9 1.200L3.500 3.700L6.100 1.200" fill="none" stroke="#b4b3b7" stroke-width="1.100"/></svg>
<svg style="left:572.4px;top:233.3px" width="13" height="13" viewBox="0 0 13 13"><path d="M0 1.0H12.5" stroke="#b4b3b7" stroke-width="1"/><path d="M0 4.7H8" stroke="#b4b3b7" stroke-width="1"/><path d="M0 8.4H12.5" stroke="#b4b3b7" stroke-width="1"/><path d="M0 12.1H8" stroke="#b4b3b7" stroke-width="1"/></svg>
<svg style="left:595.5px;top:233.3px" width="13" height="13" viewBox="0 0 13 13"><path d="M0 1.0H12.5" stroke="#b4b3b7" stroke-width="1"/><path d="M2.2 4.7H10.3" stroke="#b4b3b7" stroke-width="1"/><path d="M0 8.4H12.5" stroke="#b4b3b7" stroke-width="1"/><path d="M2.2 12.1H10.3" stroke="#b4b3b7" stroke-width="1"/></svg>
<svg style="left:618.7px;top:233.3px" width="13" height="13" viewBox="0 0 13 13"><path d="M0 1.0H12.5" stroke="#b4b3b7" stroke-width="1"/><path d="M4.5 4.7H12.5" stroke="#b4b3b7" stroke-width="1"/><path d="M0 8.4H12.5" stroke="#b4b3b7" stroke-width="1"/><path d="M4.5 12.1H12.5" stroke="#b4b3b7" stroke-width="1"/></svg>
<svg style="left:641.6px;top:233.3px" width="13" height="13" viewBox="0 0 13 13"><path d="M0 1.0H12.5" stroke="#b4b3b7" stroke-width="1"/><path d="M0 4.7H12.5" stroke="#b4b3b7" stroke-width="1"/><path d="M0 8.4H12.5" stroke="#b4b3b7" stroke-width="1"/><path d="M0 12.1H12.5" stroke="#b4b3b7" stroke-width="1"/></svg>
<div class="a" style="left:660.1px;top:230px;width:1px;height:20.5px;background:#d0cfd3;"></div>
<svg style="left:668px;top:236px" width="12" height="10" viewBox="0 0 12 10"><path d="M0 1H5M7 1H12M0 4.500H5M7 4.500H12M0 8H5M7 8H12" stroke="#c6c5c9" stroke-width="1.100"/></svg>
<svg style="left:684.3px;top:238.5px" width="7" height="5"><path d="M.9 1.200L3.500 3.700L6.100 1.200" fill="none" stroke="#c9c8cc" stroke-width="1.100"/></svg>
<div class="t" style="left:642.4px;top:264.2px;font:400 9.8px/13px 'Liberation Sans',sans-serif;color:#262524;letter-spacing:0.327px;-webkit-text-stroke:0.12px #262524;">Абзац</div>
<svg style="left:755.2px;top:266.7px" width="8" height="8" viewBox="0 0 8 8"><path d="M.5 6V.5H6" fill="none" stroke="#c4c3c7" stroke-width="1"/><path d="M3 3L7 7M7 4V7H4" fill="none" stroke="#c4c3c7" stroke-width="1"/></svg>
<div class="a" style="left:764.8px;top:195px;width:1px;height:79px;background:#d6d5d9;"></div>
<div class="a" style="left:774px;top:196.500px;width:151px;height:65px;border:1px solid #c2c1c5;border-radius:4px;background:#fff"></div>
<div class="a" style="left:904px;top:196.500px;width:21px;height:65px;border:1px solid #605f63;border-radius:0 4px 4px 0;background:#fff"></div>
<svg style="left:910.5px;top:224.5px" width="8" height="8" viewBox="0 0 8 8"><path d="M.8 1H7.200" stroke="#3b3a39" stroke-width="1"/><path d="M1.200 3.500L4 6.300L6.800 3.500" fill="none" stroke="#3b3a39" stroke-width="1.100"/></svg>
<svg style="left:778.4px;top:199.4px" width="16" height="16" viewBox="0 0 16 16"><rect x="1.800" y="3" width="12.400" height="9.600" fill="#eaf2fb" stroke="#2b7cd3" stroke-width="1.100"/><g fill="#fff" stroke="#2b7cd3" stroke-width=".8"><circle cx="1.800" cy="3" r="1.100"/><circle cx="14.200" cy="3" r="1.100"/><circle cx="1.800" cy="12.600" r="1.100"/><circle cx="14.200" cy="12.600" r="1.100"/></g><text x="8" y="11" font-family="Liberation Sans,sans-serif" font-size="8" font-weight="700" fill="#2b7cd3" text-anchor="middle">A</text></svg>
<svg style="left:800px;top:199.4px" width="16" height="16" viewBox="0 0 16 16"><g fill="none" stroke="#3b3a39" stroke-width="1.050" stroke-linejoin="round"><path d="M1.500 1.500L14.500 14.500"/></g></svg>
<svg style="left:821.2px;top:199.4px" width="16" height="16" viewBox="0 0 16 16"><g fill="none" stroke="#3b3a39" stroke-width="1.050" stroke-linejoin="round"><path d="M1.500 1.500L14.500 14.500M14.500 10.500V14.500H10.500"/></g></svg>
<svg style="left:842.1px;top:199.4px" width="16" height="16" viewBox="0 0 16 16"><g fill="none" stroke="#3b3a39" stroke-width="1.050" stroke-linejoin="round"><rect x="1.500" y="3.500" width="13" height="9.500"/></g></svg>
<svg style="left:863.3px;top:199.4px" width="16" height="16" viewBox="0 0 16 16"><g fill="none" stroke="#3b3a39" stroke-width="1.050" stroke-linejoin="round"><ellipse cx="8" cy="8.200" rx="6.800" ry="5"/></g></svg>
<svg style="left:884.5px;top:199.4px" width="16" height="16" viewBox="0 0 16 16"><g fill="none" stroke="#3b3a39" stroke-width="1.050" stroke-linejoin="round"><rect x="1.500" y="3.500" width="13" height="9.500" rx="3"/></g></svg>
<svg style="left:778.4px;top:221.6px" width="16" height="16" viewBox="0 0 16 16"><g fill="none" stroke="#3b3a39" stroke-width="1.050" stroke-linejoin="round"><path d="M8 2L14.500 14H1.500z"/></g></svg>
<svg style="left:800px;top:221.6px" width="16" height="16" viewBox="0 0 16 16"><g fill="none" stroke="#3b3a39" stroke-width="1.050" stroke-linejoin="round"><path d="M1.500 2.500H8V13.500H14.500"/></g></svg>
<svg style="left:821.2px;top:221.6px" width="16" height="16" viewBox="0 0 16 16"><g fill="none" stroke="#3b3a39" stroke-width="1.050" stroke-linejoin="round"><path d="M1.500 3H8V12H14M11.500 9.500L14 12L11.500 14.500"/></g></svg>
<svg style="left:842.1px;top:221.6px" width="16" height="16" viewBox="0 0 16 16"><g fill="none" stroke="#3b3a39" stroke-width="1.050" stroke-linejoin="round"><path d="M1.500 5.500H8.500V2.500L14.500 8L8.500 13.500V10.500H1.500z"/></g></svg>
<svg style="left:863.3px;top:221.6px" width="16" height="16" viewBox="0 0 16 16"><g fill="none" stroke="#3b3a39" stroke-width="1.050" stroke-linejoin="round"><path d="M5.500 1.500H10.500V8.500H13.500L8 14.500L2.500 8.500H5.500z"/></g></svg>
<svg style="left:884.5px;top:221.6px" width="16" height="16" viewBox="0 0 16 16"><g fill="none" stroke="#3b3a39" stroke-width="1.050" stroke-linejoin="round"><path d="M1.500 5.500C1.500 3.500 3 2.500 5 2.500H11C11 5 12 6.500 14.500 6.500V11C14.500 12.500 13.500 13.500 12 13.500H1.500z"/></g></svg>
<svg style="left:778.4px;top:242.8px" width="16" height="16" viewBox="0 0 16 16"><g fill="none" stroke="#3b3a39" stroke-width="1.050" stroke-linejoin="round"><path d="M12.500 5.500C9 10 4 11.500 2.500 8.500C1.500 5.500 5 1.500 7.500 2.500C10 4 5 10 4.500 12.500C4.500 15 10 14.500 13 12"/></g></svg>
<svg style="left:800px;top:242.8px" width="16" height="16" viewBox="0 0 16 16"><g fill="none" stroke="#3b3a39" stroke-width="1.050" stroke-linejoin="round"><path d="M1.500 3C8 3 13 7 14.500 14"/></g></svg>
<svg style="left:821.2px;top:242.8px" width="16" height="16" viewBox="0 0 16 16"><g fill="none" stroke="#3b3a39" stroke-width="1.050" stroke-linejoin="round"><path d="M1.500 8C4 2 6.500 2 8.500 8C10.500 14 13 14 14.500 12"/></g></svg>
<svg style="left:842.1px;top:242.8px" width="16" height="16" viewBox="0 0 16 16"><g fill="none" stroke="#3b3a39" stroke-width="1.050" stroke-linejoin="round"><path d="M10 1.500C8 1.500 7.500 2.500 7.500 4V6C7.500 7.300 7 8 5.500 8C7 8 7.500 8.700 7.500 10V12C7.500 13.500 8 14.500 10 14.500"/></g></svg>
<svg style="left:863.3px;top:242.8px" width="16" height="16" viewBox="0 0 16 16"><g fill="none" stroke="#3b3a39" stroke-width="1.050" stroke-linejoin="round"><path d="M6 1.500C8 1.500 8.500 2.500 8.500 4V6C8.500 7.300 9 8 10.500 8C9 8 8.500 8.700 8.500 10V12C8.500 13.500 8 14.500 6 14.500"/></g></svg>
<svg style="left:884.5px;top:242.8px" width="16" height="16" viewBox="0 0 16 16"><g fill="none" stroke="#3b3a39" stroke-width="1.050" stroke-linejoin="round"><path d="M8 1.500L9.900 6.200L14.800 6.500L11 9.700L12.200 14.500L8 11.800L3.800 14.500L5 9.700L1.200 6.500L6.100 6.200z"/></g></svg>
<svg style="left:950px;top:198px" width="27" height="27" viewBox="0 0 27 27"><rect x="4.500" y="4.500" width="16" height="16" fill="#f9d776" stroke="#e2b33f" stroke-width="1"/><rect x="1.500" y="1.500" width="9" height="9" fill="#f6f6f6" stroke="#5f5e5d" stroke-width="1.100"/><rect x="15.500" y="15.500" width="9.500" height="9.500" fill="#f6f6f6" stroke="#5f5e5d" stroke-width="1.100"/></svg>
<div class="t" style="left:931.7px;top:228.2px;font:400 11.5px/15px 'Liberation Sans',sans-serif;color:#262524;-webkit-text-stroke:0.22px #262524;transform:scaleX(0.9221);transform-origin:0 50%;">Упорядочить</div>
<svg style="left:959.1px;top:246.0px" width="7" height="5"><path d="M.9 1.200L3.500 3.700L6.100 1.200" fill="none" stroke="#3b3a39" stroke-width="1.100"/></svg>
<svg style="left:1013px;top:198px" width="27" height="27" viewBox="0 0 27 27"><rect x="1" y="1" width="23" height="23" rx="1.500" fill="#ededef" stroke="#d2d1d5" stroke-width="1"/><path d="M22.500 6L25 8.500L16 18.500L13.500 16z" fill="#c9c8cc"/><path d="M13.500 16L16 18.500C14.500 22 11 24 6.500 23.500C9.500 22.500 11 20 13.500 16z" fill="#bdbcc0"/></svg>
<div class="t" style="left:1001.6px;top:228.2px;font:400 11.5px/15px 'Liberation Sans',sans-serif;color:#aeadb1;transform:scaleX(0.8781);transform-origin:0 50%;">Экспресс-</div>
<div class="t" style="left:1008.0px;top:241.9px;font:400 11.5px/15px 'Liberation Sans',sans-serif;color:#aeadb1;transform:scaleX(0.8177);transform-origin:0 50%;">стили</div>
<svg style="left:1037.5px;top:247.5px" width="7" height="5"><path d="M.9 1.200L3.500 3.700L6.100 1.200" fill="none" stroke="#b4b3b7" stroke-width="1.100"/></svg>
<svg style="left:1059px;top:198px" width="14" height="15" viewBox="0 0 14 15"><path d="M5.500 2L11.500 7.500L6.500 11.500L1.500 7z" fill="#f2f2f2" stroke="#b4b3b7" stroke-width="1"/><path d="M4.500 3V.8H7.500V4" fill="none" stroke="#b4b3b7" stroke-width=".9"/><path d="M12.500 8.500C13.500 10 13.500 11 12.500 11C11.500 11 11.500 10 12.500 8.500z" fill="#b4b3b7"/><rect x=".3" y="12.500" width="13.400" height="2.500" fill="#c5c4c8"/></svg>
<div class="t" style="left:1076.7px;top:198.5px;font:400 11.5px/15px 'Liberation Sans',sans-serif;color:#aeadb1;transform:scaleX(0.9121);transform-origin:0 50%;">Заливка фигуры</div>
<svg style="left:1159.0px;top:204.0px" width="7" height="5"><path d="M.9 1.200L3.500 3.700L6.100 1.200" fill="none" stroke="#b4b3b7" stroke-width="1.100"/></svg>
<svg style="left:1059px;top:221px" width="14" height="15" viewBox="0 0 14 15"><path d="M1.500 1.500H9.500M1.500 1.500V10.500H5" fill="none" stroke="#b4b3b7" stroke-width="1"/><path d="M10.500 2L13 4.500L7 10.500L4 11L4.500 8z" fill="#f2f2f2" stroke="#b4b3b7" stroke-width="1"/><rect x=".3" y="12.500" width="13.400" height="2.500" fill="#c5c4c8"/></svg>
<div class="t" style="left:1076.7px;top:221.7px;font:400 11.5px/15px 'Liberation Sans',sans-serif;color:#aeadb1;transform:scaleX(0.9351);transform-origin:0 50%;">Контур фигуры</div>
<svg style="left:1153.6px;top:227.2px" width="7" height="5"><path d="M.9 1.200L3.500 3.700L6.100 1.200" fill="none" stroke="#b4b3b7" stroke-width="1.100"/></svg>
<svg style="left:1059px;top:245px" width="14" height="13" viewBox="0 0 14 13"><path d="M4.500 1.500H13L9.500 7.500H1z" fill="#f2f2f2" stroke="#b4b3b7" stroke-width="1" stroke-linejoin="round"/><path d="M1 7.500V10.500H9.500V7.500M9.500 10.500L13 4.500V1.500" fill="#d9d8dc" stroke="#b4b3b7" stroke-width="1" stroke-linejoin="round"/></svg>
<div class="t" style="left:1076.7px;top:244.6px;font:400 11.5px/15px 'Liberation Sans',sans-serif;color:#aeadb1;transform:scaleX(0.8859);transform-origin:0 50%;">Эффекты фигуры</div>
<svg style="left:1164.2px;top:250.1px" width="7" height="5"><path d="M.9 1.200L3.500 3.700L6.100 1.200" fill="none" stroke="#b4b3b7" stroke-width="1.100"/></svg>
<div class="t" style="left:944.6px;top:264.2px;font:400 9.8px/13px 'Liberation Sans',sans-serif;color:#262524;letter-spacing:-0.007px;-webkit-text-stroke:0.12px #262524;">Рисование</div>
<svg style="left:1175.3px;top:266.7px" width="8" height="8" viewBox="0 0 8 8"><path d="M.5 6V.5H6" fill="none" stroke="#c4c3c7" stroke-width="1"/><path d="M3 3L7 7M7 4V7H4" fill="none" stroke="#c4c3c7" stroke-width="1"/></svg>
<div class="a" style="left:1186.2px;top:195px;width:1px;height:79px;background:#d6d5d9;"></div>
<svg style="left:1198px;top:198.5px" width="14" height="14" viewBox="0 0 14 14"><circle cx="8.500" cy="5.500" r="4.300" fill="none" stroke="#3b3a39" stroke-width="1.100"/><path d="M5.500 8.500L1 13" stroke="#3b3a39" stroke-width="1.200" stroke-linecap="round"/></svg>
<div class="t" style="left:1216.0px;top:198.5px;font:400 11.5px/15px 'Liberation Sans',sans-serif;color:#262524;-webkit-text-stroke:0.22px #262524;transform:scaleX(0.8715);transform-origin:0 50%;">Найти</div>
<svg style="left:1197px;top:222px" width="16" height="15" viewBox="0 0 16 15"><path d="M4.500 3.500C2.500 4 1.500 5.500 1.800 7.500C2.200 9.500 4 10.500 6 10.500M4.500 8.500L6.500 10.500L4.500 12.500" fill="none" stroke="#2b7cd3" stroke-width="1.100"/><text x="7.500" y="6.500" font-family="Liberation Sans,sans-serif" font-size="8" fill="#b4459e">b</text><text x="10" y="14" font-family="Liberation Sans,sans-serif" font-size="8" fill="#2b7cd3">c</text></svg>
<div class="t" style="left:1216.0px;top:221.7px;font:400 11.5px/15px 'Liberation Sans',sans-serif;color:#262524;-webkit-text-stroke:0.22px #262524;transform:scaleX(0.8805);transform-origin:0 50%;">Заменить</div>
<svg style="left:1276.4px;top:226.0px" width="7" height="5"><path d="M.9 1.200L3.500 3.700L6.100 1.200" fill="none" stroke="#3b3a39" stroke-width="1.100"/></svg>
<svg style="left:1198px;top:244.5px" width="12" height="15" viewBox="0 0 12 15"><path d="M2 1.500V12L5 9.300L7 13.500L8.800 12.700L6.800 8.700H10.500z" fill="#fff" stroke="#3b3a39" stroke-width="1.050" stroke-linejoin="round"/></svg>
<div class="t" style="left:1216.0px;top:244.6px;font:400 11.5px/15px 'Liberation Sans',sans-serif;color:#262524;-webkit-text-stroke:0.22px #262524;transform:scaleX(0.8576);transform-origin:0 50%;">Выделить</div>
<svg style="left:1264.2px;top:249.8px" width="7" height="5"><path d="M.9 1.200L3.500 3.700L6.100 1.200" fill="none" stroke="#3b3a39" stroke-width="1.100"/></svg>
<div class="t" style="left:1204.0px;top:264.2px;font:400 9.8px/13px 'Liberation Sans',sans-serif;color:#262524;letter-spacing:0.196px;-webkit-text-stroke:0.12px #262524;">Редактирование</div>
<div class="a" style="left:1296.7px;top:195px;width:1px;height:79px;background:#d6d5d9;"></div>
<svg style="left:1323.5px;top:198.5px" width="26" height="26" viewBox="0 0 26 26"><rect x=".8" y=".8" width="24.400" height="24.400" fill="#fdf3ef" stroke="#c8614a" stroke-width="1.200"/><g fill="#fff" stroke="#c8614a" stroke-width="1"><rect x="3.300" y="3.300" width="8.300" height="8.300"/><rect x="14.300" y="3.300" width="8.300" height="8.300"/><rect x="3.300" y="14.300" width="8.300" height="8.300"/><rect x="14.300" y="14.300" width="8.300" height="8.300"/></g></svg>
<div class="t" style="left:1307.6px;top:227.8px;font:400 11.5px/15px 'Liberation Sans',sans-serif;color:#262524;-webkit-text-stroke:0.22px #262524;transform:scaleX(0.9081);transform-origin:0 50%;">Надстройки</div>
<div class="t" style="left:1308.6px;top:264.2px;font:400 9.8px/13px 'Liberation Sans',sans-serif;color:#262524;letter-spacing:0.181px;-webkit-text-stroke:0.12px #262524;">Надстройки</div>
<div class="a" style="left:1374.1px;top:195px;width:1px;height:79px;background:#d6d5d9;"></div>
<svg style="left:1404px;top:264px" width="10" height="7"><path d="M1 1.300L4.800 5.200L8.600 1.300" fill="none" stroke="#3b3a39" stroke-width="1.200"/></svg>
<!-- p50_slide.py -->
<div class="a" style="left:367px;top:294px;width:973.4px;height:548.7px;background:#e0b48c;box-shadow:inset 0 0 0 1px rgba(150,135,125,.16)"></div>
<div class="t st" style="left:408px;top:330.5px;font:italic 700 24.27px/29px 'Liberation Serif',serif;color:#3a0a0c;text-decoration:underline;text-decoration-thickness:1.2px;text-underline-offset:0.6px;text-decoration-skip-ink:none">Організація інклюзії у вищому навчальному закладі передбачає:</div>
<div class="t sl" style="left:408px;top:359.60px">-<u>обладнання</u> <u>ресурсної</u> <u>кімнати</u>; <u>приміщення</u> для <u>надання</u> <u>консультацій</u> психологом,</div>
<div class="t sl" style="left:408px;top:388.76px"><u>відпочинку</u>, <u>особистої</u> <u>гігієни</u>, <u>медичного</u> <u>обслуговування</u>; <u>зали</u> для занять з</div>
<div class="t sl" style="left:408px;top:417.92px"><u>лікувальної</u> <u>фізкультури</u>.</div>
<div class="t sl" style="left:408px;top:476.24px">-<u>індивідуальний</u> <u>навчальний</u> план <u>здобувача</u> <u>освіти</u> з <u>особливими</u> <u>освітніми</u></div>
<div class="t sl" style="left:408px;top:505.40px">потребами <u>розробляється</u> за <u>його</u> <u>участю</u>, з <u>урахуванням</u> <u>рекомендацій</u></div>
<div class="t sl" style="left:408px;top:534.56px"><u>індивідуальної</u> <u>програми</u> <u>реабілітації</u> особи з <u>інвалідністю</u> (за <u>наявності</u>) та/<u>або</u></div>
<div class="t sl" style="left:408px;top:563.72px"><u>висновку</u> про <u>комплексну</u> <u>психолого</u>-<u>педагогічну</u> <u>оцінку</u> <u>розвитку</u> особи (за</div>
<div class="t sl" style="left:408px;top:592.88px"><u>наявності</u>), <u>підписується</u> таким <u>здобувачем</u> <u>освіти</u> та <u>затверджується</u> <u>керівником</u></div>
<div class="t sl" style="left:408px;top:622.04px">закладу <u>вищої</u> <u>освіти</u>.</div>
<div class="t sl" style="left:408px;top:680.36px"><u>Заклади</u> <u>вищої</u> <u>освіти</u> <u>надають</u> <u>освітні</u> <u>послуги</u> <u>здобувачам</u> <u>освіти</u> з <u>особливими</u></div>
<div class="t sl" style="left:408px;top:709.52px"><u>освітніми</u> потребами за <u>рахунок</u> <u>коштів</u> державного та <u>місцевих</u> <u>бюджетів</u>, <u>інших</u> не</div>
<div class="t sl" style="left:408px;top:738.68px"><u>заборонених</u> <u>законодавством</u> <u>джерел</u>.</div>
<svg class="ibeam" style="left:682px;top:367px" width="8" height="18" viewBox="0 0 8 18"><path d="M1.500 1C3 1 4 1.500 4 3V15C4 16.500 3 17 1.500 17M6.500 1C5 1 4 1.500 4 3M4 15C4 16.500 5 17 6.500 17" fill="none" stroke="#7d8a94" stroke-width="1.300" opacity=".75"/></svg>
<!-- p60_status.py -->
<div class="t" style="left:26.0px;top:865.2px;font:400 10.5px/14px 'Liberation Sans',sans-serif;color:#4c4b4f;transform:scaleX(0.9094);transform-origin:0 50%;">Слайд 36 из 37</div>
<svg style="left:109.500px;top:864.9px" width="14" height="14" viewBox="0 0 14 14"><path d="M6.500 2.500C5 1.500 3 1.300 1 1.800V11C3 10.500 5 10.700 6.500 11.700C8 10.700 9 10.500 9.500 10.500M6.500 2.500V11.500M6.500 2.500C8 1.500 10 1.300 12 1.800V7.500" fill="none" stroke="#444" stroke-width="1"/><path d="M9 9L13 13M13 9L9 13" stroke="#444" stroke-width="1"/></svg>
<div class="t" style="left:138.4px;top:865.2px;font:400 10.5px/14px 'Liberation Sans',sans-serif;color:#4c4b4f;letter-spacing:0.115px;">украинский</div>
<svg style="left:208.500px;top:865.3px" width="13" height="14" viewBox="0 0 14 15"><circle cx="6.500" cy="2.300" r="1.500" fill="none" stroke="#444" stroke-width="1"/><path d="M1 5L4.500 6V9L2.500 13.500M12 5L8.500 6V9L10.500 13.500M4.500 6H8.500M4.500 9H8.500" fill="none" stroke="#444" stroke-width="1" stroke-linecap="round"/><path d="M9 10L13 14M13 10L9 14" stroke="#444" stroke-width="1"/></svg>
<div class="t" style="left:224.5px;top:865.2px;font:400 10.5px/14px 'Liberation Sans',sans-serif;color:#2b2b2b;letter-spacing:0.044px;-webkit-text-stroke:0.35px #2b2b2b;">Специальные возможности: проверьте рекомендации</div>
<svg style="left:941px;top:864.9px" width="15" height="14" viewBox="0 0 15 14"><path d="M0 12.500H15M0 9.500H15M2 6.500H13M4.500 5L7.500 2L10.500 5" fill="none" stroke="#444" stroke-width="1"/></svg>
<div class="t" style="left:958.6px;top:865.2px;font:400 10.5px/14px 'Liberation Sans',sans-serif;color:#3b3a39;transform:scaleX(0.9437);transform-origin:0 50%;">Заметки</div>
<svg style="left:1014px;top:864.9px" width="14" height="14" viewBox="0 0 14 14"><path d="M1 1.500H12.500V9.500H6L3 12.500V9.500H1z" fill="none" stroke="#444" stroke-width="1" stroke-linejoin="round"/></svg>
<div class="t" style="left:1029.9px;top:865.2px;font:400 10.5px/14px 'Liberation Sans',sans-serif;color:#3b3a39;">Примечания</div>
<div class="a" style="left:1107.4px;top:864px;width:35.2px;height:17.5px;background:#dcdbde;"></div>
<svg style="left:1118.500px;top:866.8px" width="13" height="12" viewBox="0 0 13 12"><rect x=".5" y=".5" width="12" height="11" fill="none" stroke="#444" stroke-width="1"/><rect x="4" y="2.500" width="7" height="4.500" fill="none" stroke="#444" stroke-width="1"/><path d="M2 9H11" stroke="#444" stroke-width="1"/></svg>
<svg style="left:1154px;top:866.8px" width="13" height="12" viewBox="0 0 13 12"><g fill="none" stroke="#444" stroke-width="1"><rect x=".5" y=".5" width="4.500" height="4"/><rect x="7.500" y=".5" width="4.500" height="4"/><rect x=".5" y="7" width="4.500" height="4"/><rect x="7.500" y="7" width="4.500" height="4"/></g></svg>
<svg style="left:1189px;top:866.6px" width="13" height="12" viewBox="0 0 13 12"><path d="M6.500 1.500C5 .5 3 .5 .5 1V10.500C3 10 5 10 6.500 11C8 10 10 10 12.500 10.500V1C10 .5 8 .5 6.500 1.500zM6.500 1.500V11" fill="none" stroke="#444" stroke-width="1"/><path d="M2 3.500H5M2 5.500H5M2 7.500H5M8 3.500H11M8 5.500H11M8 7.500H11" stroke="#444" stroke-width=".7"/></svg>
<svg style="left:1224px;top:866.2px" width="13" height="13" viewBox="0 0 13 13"><path d="M.5 1H12.500M1.500 1V7H11.500V1M6.500 7V11.500M4 12H9" fill="none" stroke="#444" stroke-width="1"/></svg>
<div class="a" style="left:1254.5px;top:872.1px;width:6px;height:1px;background:#555;"></div>
<div class="a" style="left:1266px;top:872.1px;width:87px;height:1px;background:#6a6a6a;"></div>
<div class="a" style="left:1310.5px;top:867.6px;width:3px;height:10px;background:#555;"></div>
<div class="a" style="left:1358px;top:872.1px;width:7px;height:1px;background:#555;"></div>
<div class="a" style="left:1361px;top:869.1px;width:1px;height:7px;background:#555;"></div>
<div class="t" style="left:1377.6px;top:865.2px;font:400 10.5px/14px 'Liberation Sans',sans-serif;color:#4c4b4f;transform:scaleX(0.8859);transform-origin:0 50%;">115%</div>
<svg style="left:1411px;top:864.9px" width="14" height="14" viewBox="0 0 14 14"><rect x="4" y="4" width="6" height="6" fill="none" stroke="#444" stroke-width="1"/><path d="M5.500 2L7 .5L8.500 2M5.500 12L7 13.500L8.500 12M2 5.500L.5 7L2 8.500M12 5.500L13.500 7L12 8.500" fill="none" stroke="#444" stroke-width="1"/></svg>
<!-- p90_bottom.py -->
<div class="t" style="left:241.7px;top:929.6px;font:400 15px/20px 'Liberation Sans',sans-serif;color:#fff;letter-spacing:0.084px;-webkit-text-stroke:0.55px #fff;">Participants</div>
<div class="t" style="left:404.4px;top:929.6px;font:400 15px/20px 'Liberation Sans',sans-serif;color:#fff;-webkit-text-stroke:0.55px #fff;transform:scaleX(0.9689);transform-origin:0 50%;">Chat</div>
<div class="t" style="left:507.6px;top:929.6px;font:400 15px/20px 'Liberation Sans',sans-serif;color:#fff;-webkit-text-stroke:0.55px #fff;transform:scaleX(0.9365);transform-origin:0 50%;">React</div>
<div class="t" style="left:594.6px;top:929.6px;font:400 15px/20px 'Liberation Sans',sans-serif;color:#fff;-webkit-text-stroke:0.55px #fff;transform:scaleX(0.9606);transform-origin:0 50%;">Raise hand</div>
<div class="t" style="left:728.4px;top:929.6px;font:400 15px/20px 'Liberation Sans',sans-serif;color:#fff;-webkit-text-stroke:0.55px #fff;transform:scaleX(0.9593);transform-origin:0 50%;">Share</div>
<div class="t" style="left:819.4px;top:929.6px;font:400 15px/20px 'Liberation Sans',sans-serif;color:#fff;letter-spacing:0.086px;-webkit-text-stroke:0.55px #fff;">AI Companion</div>
<div class="t" style="left:959.6px;top:929.6px;font:400 15px/20px 'Liberation Sans',sans-serif;color:#fff;letter-spacing:-0.263px;-webkit-text-stroke:0.55px #fff;">Apps</div>
<div class="t" style="left:1067.8px;top:929.6px;font:400 15px/20px 'Liberation Sans',sans-serif;color:#fff;letter-spacing:0.028px;-webkit-text-stroke:0.55px #fff;">Notes</div>
<div class="t" style="left:1167.6px;top:929.6px;font:400 15px/20px 'Liberation Sans',sans-serif;color:#fff;letter-spacing:0.249px;-webkit-text-stroke:0.55px #fff;">Whiteboards</div>
<div class="t" style="left:1304.5px;top:929.6px;font:400 15px/20px 'Liberation Sans',sans-serif;color:#fff;letter-spacing:0.741px;-webkit-text-stroke:0.55px #fff;">More</div>
<div class="t" style="left:302.4px;top:898.7px;font:400 14.5px/19px 'Liberation Sans',sans-serif;color:#b4bccb;-webkit-text-stroke:0.5px #b4bccb;transform:scaleX(0.8246);transform-origin:0 50%;">17</div>
<svg style="left:341.2px;top:906px" width="12" height="8" viewBox="0 0 12 8"><path d="M1.800 6.200L6 2L10.200 6.200" fill="none" stroke="#fff" stroke-width="1.700" stroke-linecap="round" stroke-linejoin="round"/></svg>
<svg style="left:454px;top:906px" width="12" height="8" viewBox="0 0 12 8"><path d="M1.800 6.200L6 2L10.200 6.200" fill="none" stroke="#fff" stroke-width="1.700" stroke-linecap="round" stroke-linejoin="round"/></svg>
<svg style="left:663.9px;top:906px" width="12" height="8" viewBox="0 0 12 8"><path d="M1.800 6.200L6 2L10.200 6.200" fill="none" stroke="#fff" stroke-width="1.700" stroke-linecap="round" stroke-linejoin="round"/></svg>
<svg style="left:268px;top:898px" width="26" height="26" viewBox="0 0 26 26"><g fill="none" stroke="#fff" stroke-width="1.700" stroke-linecap="round" stroke-linejoin="round"><circle cx="8.200" cy="5.600" r="3"/><circle cx="18" cy="9.700" r="3"/><path d="M2.700 19.500V15.800C2.700 13.600 4.400 12 6.500 12H10.200C11.600 12 12.700 12.600 13.400 13.600"/><path d="M2.700 19.500C2.700 21 3.600 22 5.200 22H10"/><rect x="12" y="16.200" width="11.500" height="6" rx="3"/></g></svg>
<svg style="left:403px;top:895px" width="32" height="30" viewBox="0 0 32 30"><g fill="none" stroke="#fff" stroke-width="1.700" stroke-linecap="round" stroke-linejoin="round"><path d="M9.500 6.500C10.500 3.500 13 2 17 1.800H23C27 1.800 29.200 4 29.200 8V13C29.200 15 28.500 16.200 27 17"/><path d="M8.500 8.300H18.500C21.500 8.300 23.500 10.300 23.500 13.300V16.800C23.500 19.800 21.500 21.800 18.500 21.800H14.500L9.200 26.500C8.600 27 8.200 26.800 8.400 26L9.400 21.800H8.500C5.500 21.800 3.200 19.800 3.200 16.800V13.300C3.200 10.300 5.500 8.300 8.500 8.300z"/></g><g fill="#fff"><circle cx="8.800" cy="15.200" r="1.150"/><circle cx="13.300" cy="15.200" r="1.150"/><circle cx="17.800" cy="15.200" r="1.150"/></g></svg>
<svg style="left:509px;top:895px" width="34" height="30" viewBox="0 0 34 30"><path fill="none" stroke="#fff" stroke-width="1.700" stroke-linecap="round" stroke-linejoin="round" transform="rotate(14 17 15)" d="M17 26.500L5.600 15.600C2.600 12.600 2.600 8.200 5.400 5.600C8.300 3 12.600 3.400 15.200 6.400L17 8.400L18.800 6.400C21.400 3.400 25.700 3 28.600 5.600C31.400 8.200 31.400 12.600 28.400 15.600z"/></svg>
<svg style="left:614.500px;top:893px" width="28" height="34" viewBox="0 0 28 34"><g fill="none" stroke="#fff" stroke-width="1.700" stroke-linecap="round" stroke-linejoin="round"><path d="M6.800 17.500V7.500C6.800 6.300 7.500 5.500 8.600 5.500C9.700 5.500 10.400 6.300 10.400 7.500V15"/><path d="M10.400 15V4.500C10.400 3.300 11.100 2.500 12.200 2.500C13.300 2.500 14 3.300 14 4.500V15"/><path d="M14 15V5.500C14 4.300 14.700 3.500 15.800 3.500C16.900 3.500 17.600 4.300 17.600 5.500V15.500"/><path d="M17.600 15.500V8.500C17.600 7.300 18.300 6.500 19.300 6.500C20.300 6.500 21 7.300 21 8.500V19.500L22.600 16.600C23.300 15.400 24.500 15 25.400 15.600C26.200 16.100 26.400 17 26 18L23.500 24.500C21.800 29 18.800 31.200 14.500 31.200C9.700 31.200 6.800 28 6.800 23V17.500"/></g></svg>
<svg style="left:732px;top:897.500px" width="30" height="25" viewBox="0 0 30 25"><rect width="30" height="24.500" rx="3.500" fill="#20e685"/><path d="M15 19.500V8M10 12L15 6.800L20 12" fill="none" stroke="#000" stroke-width="3.200" stroke-linejoin="miter"/></svg>
<svg style="left:852px;top:895px" width="30" height="30" viewBox="0 0 30 30"><defs><linearGradient id="ai" x1="0" y1="0" x2="1" y2="1"><stop offset="0" stop-color="#ffffff"/><stop offset=".5" stop-color="#b8d8e6"/><stop offset="1" stop-color="#f2f7fa"/></linearGradient></defs><path d="M13.800 1.600C15.600 9.500 19 13 27 14.800C19 16.600 15.600 20.100 13.800 28.400C12 20.100 8.600 16.600 .6 14.800C8.600 13 12 9.500 13.800 1.600z" fill="url(#ai)"/><path d="M24.500 0.500C25 3.300 26 4.400 28.800 5C26 5.600 25 6.700 24.500 9.500C24 6.700 23 5.600 20.200 5C23 4.400 24 3.300 24.500 0.500z" fill="#e3eff5"/></svg>
<svg style="left:961px;top:895px" width="30" height="30" viewBox="0 0 30 30"><g fill="none" stroke="#fff" stroke-width="1.700" stroke-linecap="round" stroke-linejoin="round" stroke-width="1.900"><circle cx="22.300" cy="7.600" r="4.600"/><circle cx="7.300" cy="22.300" r="4.600"/><path d="M2.800 12.500V9C2.800 5 5 2.800 9 2.800H12.500"/><path d="M27 17.500V21C27 25 25 27 21 27H17.500"/></g></svg>
<svg style="left:1071px;top:893px" width="32" height="34" viewBox="0 0 32 34"><g fill="none" stroke="#fff" stroke-width="1.700" stroke-linecap="round" stroke-linejoin="round"><path d="M14 28.500H9.500C7 28.500 5.500 27 5.500 24.500V6.800C5.500 4.300 7 2.800 9.500 2.800H21.500C24 2.800 25.500 4.300 25.500 6.800V24"/><path d="M12.500 9.500H20M12.500 14H20M12.500 18.500H16"/><path d="M2.800 7.500H5.500M2.800 11H5.500M2.800 14.500H5.500M2.800 18H5.500M2.800 21.500H5.500M2.800 25H5.500" stroke-width="1.300"/></g><path d="M14.200 28.800L17.500 26.300H27.500C28.800 26.300 29.800 27.300 29.800 28.800C29.800 30.300 28.800 31.300 27.500 31.300H17.500z" fill="#fff"/></svg>
<svg style="left:1193px;top:895px" width="34" height="30" viewBox="0 0 34 30"><g fill="none" stroke="#fff" stroke-width="1.700" stroke-linecap="round" stroke-linejoin="round" stroke-width="1.900"><path d="M13 24.800H6C3.800 24.800 2.800 23.800 2.800 21.600V6.400C2.800 4.200 3.800 3.200 6 3.200H28C30.200 3.200 31.200 4.200 31.200 6.400V21"/></g><path d="M14.500 24.800L18 22.200H30C31.300 22.200 32.300 23.200 32.300 24.700C32.300 26.200 31.300 27.200 30 27.200H18z" fill="#fff"/></svg>
<svg style="left:1307px;top:894px" width="32" height="32" viewBox="0 0 32 32"><circle cx="15.800" cy="15.800" r="14" fill="none" stroke="#fff" stroke-width="1.700"/><circle cx="8.300" cy="16" r="1.500" fill="#fff"/><circle cx="15.800" cy="16" r="1.500" fill="#fff"/><circle cx="23.300" cy="16" r="1.500" fill="#fff"/></svg>
</body></html>
